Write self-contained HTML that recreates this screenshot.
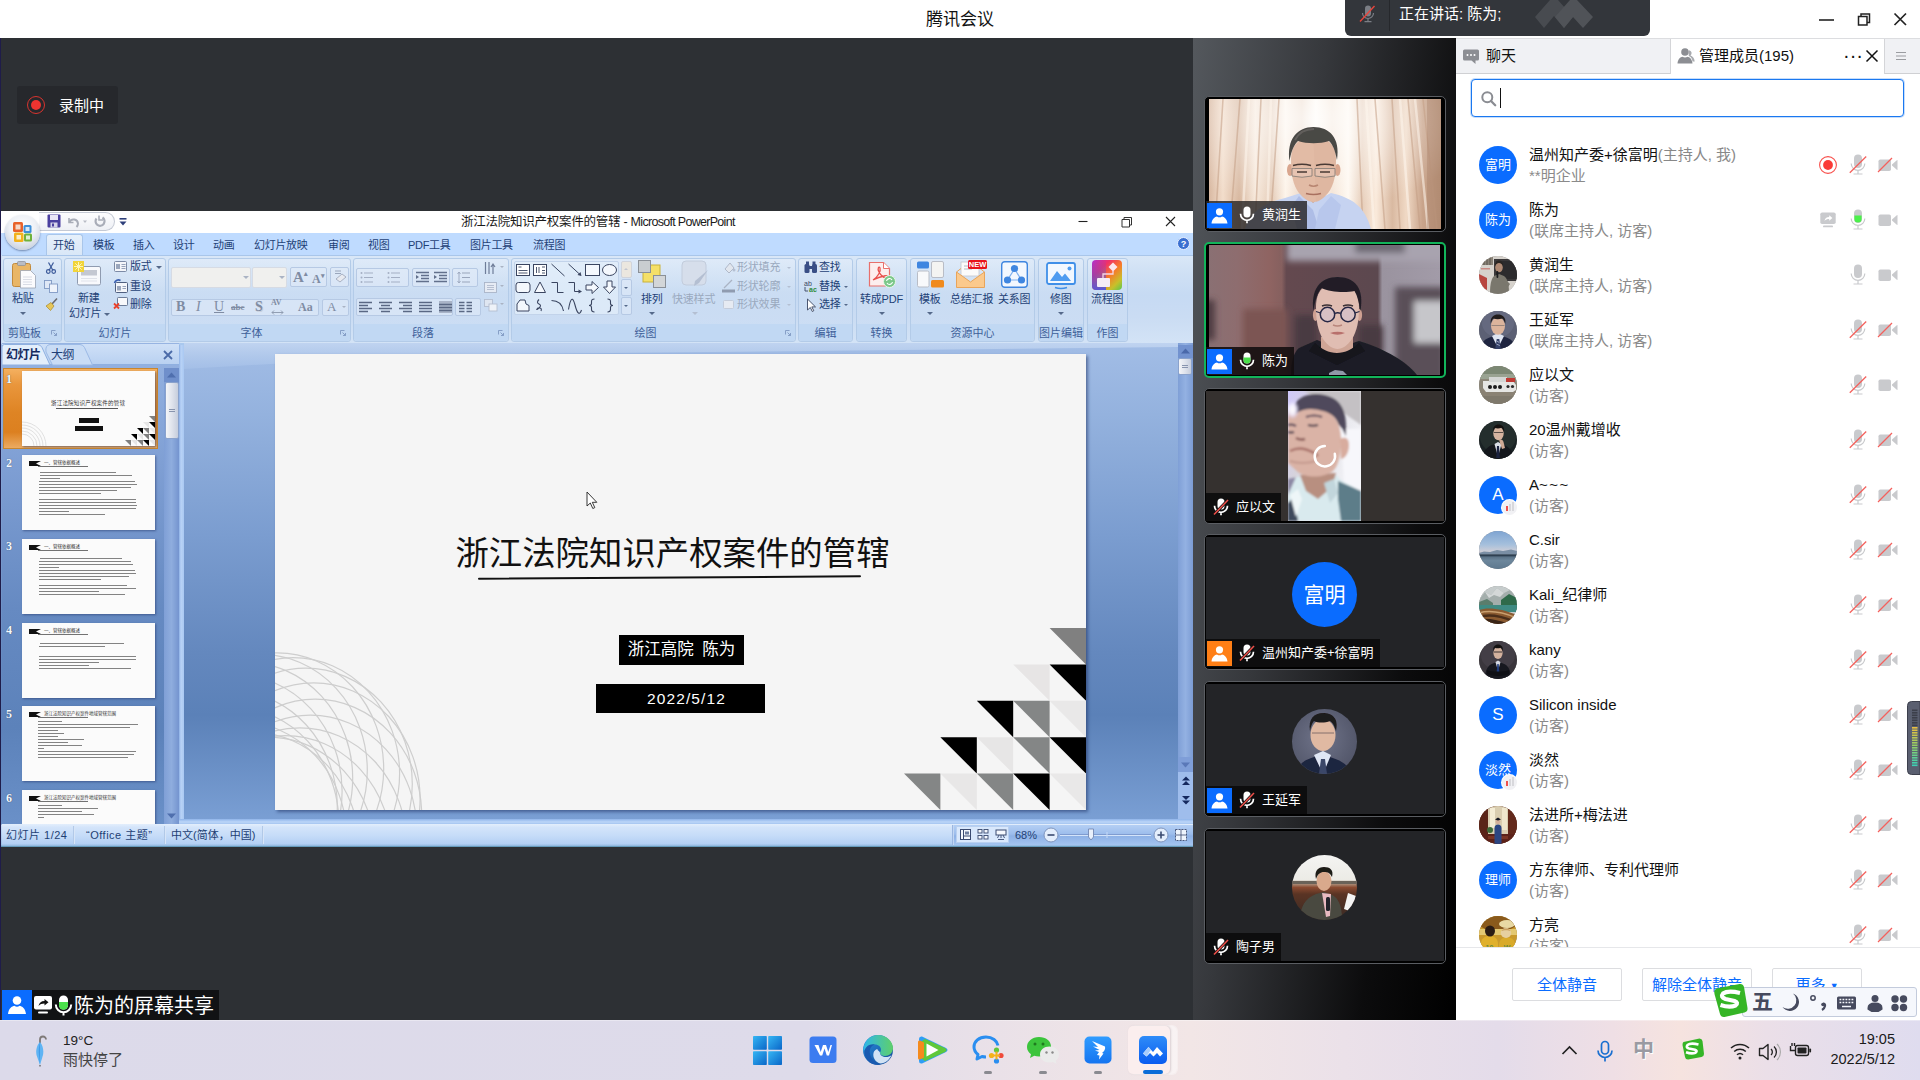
<!DOCTYPE html>
<html lang="zh-CN">
<head>
<meta charset="utf-8">
<title>腾讯会议</title>
<style>
*{box-sizing:border-box;margin:0;padding:0}
html,body{width:1920px;height:1080px;overflow:hidden;background:#2d3034;font-family:"Liberation Sans","Noto Sans CJK SC",sans-serif;color:#000}
.abs{position:absolute}
svg{display:block;overflow:visible}
#titlebar{position:absolute;left:0;top:0;width:1920px;height:38px;background:#fff}
#titlebar .t{position:absolute;left:0;width:1920px;top:8px;text-align:center;font-size:17px;color:#111;line-height:24px}
#main{position:absolute;left:0;top:38px;width:1193px;height:982px;background:#2d3034}
#strip{position:absolute;left:1193px;top:38px;width:263px;height:982px;background:linear-gradient(97deg,#54585d 0%,#36383c 35%,#0c0c0d 75%,#000 100%)}
#panel{position:absolute;left:1456px;top:38px;width:464px;height:982px;background:#fff}
#taskbar{position:absolute;left:0;top:1020px;width:1920px;height:60px;background:linear-gradient(90deg,#dcdaea 0%,#dedbea 42%,#eae1e8 52%,#f2e6e6 62%,#ebe1e9 70%,#e4dcea 78%,#efdfe5 84%,#f6e3df 87.5%,#ebdfe8 92%,#dfdcef 100%)}
#ppt{position:absolute;left:0;top:211px;width:1193px;height:635px;background:#bfdbff}
</style>
</head>
<body>

<div id="titlebar"><div class="t">腾讯会议</div>
<svg class="abs" style="left:1815px;top:8px" width="100" height="24" viewBox="0 0 100 24">
<path d="M4 12h15" stroke="#222" stroke-width="1.6" fill="none"/>
<path d="M43.5 8.500h8.500v8.500h-8.500z M46 8.500v-2.500h8.500v8.500h-2.500" stroke="#222" stroke-width="1.5" fill="none"/>
<path d="M79.500 5.500l11.500 11.500M91 5.500l-11.500 11.500" stroke="#222" stroke-width="1.7" fill="none"/>
</svg>
</div>
<div id="main"></div>
<div class="abs" style="left:0;top:38px;width:1px;height:982px;background:#1f1c4a"></div>
<!-- speaking box -->
<div class="abs" style="left:1345px;top:0;width:305px;height:36px;background:#33363b;border-radius:0 0 6px 6px;z-index:30">
 <div class="abs" style="left:44px;top:0;width:1px;height:31px;background:#26282c"></div>
 <svg class="abs" style="left:12px;top:3px" width="22" height="22" viewBox="0 0 22 22">
  <rect x="8" y="2.500" width="6" height="11" rx="3" fill="#7b7e85"/>
  <path d="M5.500 10a5.500 5.500 0 0 0 11 0M11 15.500v3M7.500 18.700h7" stroke="#7b7e85" stroke-width="1.200" fill="none"/>
  <path d="M3 18.500L17.500 3" stroke="#e8453c" stroke-width="1.400"/>
 </svg>
 <div class="abs" style="left:54px;top:2px;font-size:15px;line-height:24px;color:#fff;white-space:nowrap">正在讲话: 陈为;</div>
 <svg class="abs" style="left:188px;top:0" width="62" height="30" viewBox="0 0 62 30">
  <path d="M2 17L17 0h8L40 17 31 28 21 16 11 28z" fill="#484b50"/>
  <path d="M22 17L37 0h7L60 17 50 28 40 17 31 28z" fill="#505358"/>
 </svg>
</div>
<!-- recording badge -->
<div class="abs" style="left:17px;top:86px;width:101px;height:38px;background:#26282c;border-radius:3px">
 <div class="abs" style="left:10px;top:10px;width:18px;height:18px;border-radius:50%;border:1.3px solid #d8342f"></div>
 <div class="abs" style="left:14px;top:14px;width:10px;height:10px;border-radius:50%;background:#ee3430"></div>
 <div class="abs" style="left:42px;top:8px;font-size:15px;line-height:24px;color:#fff;white-space:nowrap">录制中</div>
</div>
<!-- share label bottom -->
<div class="abs" style="left:2px;top:990px;width:217px;height:30px;background:#111214;z-index:5">
 <div class="abs" style="left:0;top:0;width:30px;height:30px;background:#0a6cff"></div>
 <svg class="abs" style="left:0;top:0" width="30" height="30" viewBox="0 0 30 30">
  <circle cx="15" cy="10.500" r="4.300" fill="#fff"/>
  <path d="M6 24c0.500-5.500 4-8 6.500-8.300 1.500 1.300 3.500 1.300 5 0C20 16 23.500 18.500 24 24z" fill="#fff"/>
 </svg>
 <svg class="abs" style="left:31px;top:5px" width="22" height="20" viewBox="0 0 22 20">
  <rect x="1" y="1" width="18" height="13.500" rx="2" fill="#fff"/>
  <path d="M5.500 11c0.500-3 2.500-5 6-5v-2l4 3.300-4 3.300v-2c-2.500 0-4.500 0.700-6 2.400z" fill="#111"/>
  <rect x="5" y="16.500" width="10" height="2" rx="1" fill="#fff"/>
 </svg>
 <svg class="abs" style="left:52px;top:4px" width="20" height="24" viewBox="0 0 20 24">
  <rect x="5" y="1.500" width="9" height="14" rx="4.500" fill="#fff"/>
  <path d="M5 8h9v3.200a4.500 4.500 0 0 1-9 0z" fill="#4be04b"/>
  <path d="M1.800 10.500a7.700 7.700 0 0 0 15.400 0M9.500 18.500v3" stroke="#fff" stroke-width="2" fill="none"/>
 </svg>
 <div class="abs" style="left:72px;top:2px;font-size:20px;line-height:28px;color:#fff;white-space:nowrap">陈为的屏幕共享</div>
</div>

<div id="pptedge" class="abs" style="left:1px;top:211px;width:1px;height:636px;background:linear-gradient(180deg,#fff 0,#fff 22px,#bfdbff 22px,#bfdbff 44px,#cfe0f4 44px,#c6daf3 132px,#97b4e2 134px,#5c82ba 520px,#6a90c8 613px,#c6dcf8 614px,#9cc0e6 634px,#4d8aa8 636px)"></div>
<svg class="abs" style="left:1907px;top:701px;z-index:20" width="13" height="74" viewBox="0 0 13 74"><path d="M13 0.500h-8.500a4 4 0 0 0-4 4v65a4 4 0 0 0 4 4h8.500z" fill="#5a5f70" stroke="#3c3f4c" stroke-width="1"/><rect x="5" y="8.5" width="5.500" height="1.600" fill="#3c3f4a"/><rect x="5" y="11.0" width="5.500" height="1.600" fill="#3c3f4a"/><rect x="5" y="13.5" width="5.500" height="1.600" fill="#3c3f4a"/><rect x="5" y="16.0" width="5.500" height="1.600" fill="#3c3f4a"/><rect x="5" y="18.5" width="5.500" height="1.600" fill="#3c3f4a"/><rect x="5" y="21.0" width="5.500" height="1.600" fill="#3c3f4a"/><rect x="5" y="23.5" width="5.500" height="1.600" fill="#3c3f4a"/><rect x="5" y="26.0" width="5.500" height="1.600" fill="#e8c040"/><rect x="5" y="28.5" width="5.500" height="1.600" fill="#dcc245"/><rect x="5" y="31.0" width="5.500" height="1.600" fill="#d0c44a"/><rect x="5" y="33.5" width="5.500" height="1.600" fill="#c4c650"/><rect x="5" y="36.0" width="5.500" height="1.600" fill="#b9c855"/><rect x="5" y="38.5" width="5.500" height="1.600" fill="#adca5a"/><rect x="5" y="41.0" width="5.500" height="1.600" fill="#a1cc60"/><rect x="5" y="43.5" width="5.500" height="1.600" fill="#95ce65"/><rect x="5" y="46.0" width="5.500" height="1.600" fill="#8ad06d"/><rect x="5" y="48.5" width="5.500" height="1.600" fill="#7fd077"/><rect x="5" y="51.0" width="5.500" height="1.600" fill="#74d081"/><rect x="5" y="53.5" width="5.500" height="1.600" fill="#68d08b"/><rect x="5" y="56.0" width="5.500" height="1.600" fill="#5dd095"/><rect x="5" y="58.5" width="5.500" height="1.600" fill="#52d09f"/><rect x="5" y="61.0" width="5.500" height="1.600" fill="#47d0a9"/><rect x="5" y="63.5" width="5.500" height="1.600" fill="#3cd0b4"/></svg>

<style>
#ppt{position:absolute;left:2px;top:211px;width:1191px;height:636px;background:#bfdbff;overflow:hidden;font-family:"Liberation Sans","Noto Sans CJK SC",sans-serif}
#ppt .tt{position:absolute;left:0;top:0;width:1191px;height:22px;background:#fff}
#ppt .tabs{position:absolute;left:0;top:22px;width:1191px;height:22px;background:#bfdbff}
#ppt .tab{position:absolute;top:3px;font-size:11px;line-height:18px;color:#1e4176;white-space:nowrap;letter-spacing:-0.3px}
#rib{position:absolute;left:0;top:44px;width:1191px;height:88px;background:linear-gradient(180deg,#d9e7f7 0%,#cfe0f4 20%,#c6daf3 45%,#cadcf3 70%,#d3e3f6 100%);border-top:1px solid #a9c6ea}
.grp{position:absolute;top:2px;height:84px;border:1px solid #b3cbe8;border-radius:3px;background:linear-gradient(180deg,rgba(225,236,249,.7) 0%,rgba(206,223,243,.5) 40%,rgba(201,219,243,.5) 100%)}
.grp .gl{position:absolute;left:0;right:0;bottom:0;height:17px;background:#c1d8f3;font-size:11px;line-height:19px;overflow:hidden;text-align:center;color:#3e5f99;white-space:nowrap;border-radius:0 0 3px 3px}
.rt{position:absolute;margin-top:-1px;font-size:11px;line-height:14px;color:#1e4176;white-space:nowrap;letter-spacing:-0.2px}
.rt.dis{color:#9aa9be}
.bx{position:absolute;border:1px solid #b6c9e4;border-radius:2px;background:rgba(225,235,248,.55)}
.dd{position:absolute;width:0;height:0;border-left:3px solid transparent;border-right:3px solid transparent;border-top:3px solid #55698a}
#pane{position:absolute;left:0;top:132px;width:177px;height:481px;background:linear-gradient(180deg,#97b4e2 0%,#7f9fd4 25%,#668ac2 55%,#5c82ba 80%,#6a90c8 100%)}
.th{position:absolute;left:20px;width:133px;height:75px;background:#fbfbfb;box-shadow:1px 1px 2px rgba(40,60,110,.6);overflow:hidden}
.thn{position:absolute;left:4px;font-family:"Liberation Serif",serif;font-weight:bold;font-size:12px;color:#f4f8ff;text-shadow:0 0 1px #345}
.ln{position:absolute;height:1px;background:#555;opacity:.75}
#work{position:absolute;left:182px;top:132px;width:994px;height:477px;background:linear-gradient(180deg,#a2bde6 0%,#94b2de 15%,#7b9dd0 40%,#6488be 65%,#5b81b8 78%,#7a9fd4 100%);overflow:hidden}
#slide{position:absolute;left:273px;top:143px;width:811px;height:456px;background:#f5f5f5;box-shadow:2px 2px 3px rgba(30,50,100,.55);overflow:hidden}
#stat{position:absolute;left:0;top:613px;width:1191px;height:23px;background:linear-gradient(180deg,#e3eefc 0%,#d3e4fa 15%,#c6dcf8 50%,#b4d0f4 85%,#9cc0e6 93%,#4d8aa8 100%);font-size:11px;color:#1e3f74}
#stat .st{position:absolute;top:3px;line-height:16px;white-space:nowrap}
#stat .sp{position:absolute;top:2px;width:2px;height:18px;background:linear-gradient(90deg,#9fbbe0,#eaf3ff)}
</style>
<div id="ppt">
<div class="tt">
<div class="abs" style="left:37px;top:1px;width:76px;height:19px;border:1px solid #c4c9d4;border-left:none;border-radius:0 10px 10px 0;background:linear-gradient(180deg,#fdfdfe,#eef0f5)"></div>
<svg class="abs" style="left:45px;top:3px" width="14" height="14" viewBox="0 0 14 14"><rect x="0.500" y="0.500" width="13" height="13" rx="1" fill="#4a3f9f"/><rect x="3" y="1" width="8" height="5" fill="#e9e6f6"/><rect x="3.500" y="8.500" width="7" height="5" fill="#d6d3ea"/><rect x="5" y="9.500" width="2" height="3" fill="#4a3f9f"/></svg>
<svg class="abs" style="left:64px;top:4px" width="50" height="13" viewBox="0 0 50 13"><path d="M3 3v4.500h4.500" stroke="#a9adb8" stroke-width="1.600" fill="none"/><path d="M3.500 7a4.500 4.500 0 0 1 8.500 1.500q0 2-1.500 3.500" stroke="#a9adb8" stroke-width="2" fill="none"/><path d="M17 5.500h4l-2 2.500z" fill="#b9bcc6"/><path d="M36.500 2.500a4.500 4.500 0 1 1-6 1" stroke="#a9adb8" stroke-width="2.200" fill="none"/><path d="M33 0.500v4.500h4" stroke="#a9adb8" stroke-width="1.600" fill="none"/></svg>
<svg class="abs" style="left:117px;top:7px" width="8" height="9" viewBox="0 0 8 9"><rect x="0.500" y="0" width="7" height="1.600" fill="#2e3f7a"/><path d="M0.500 3.500h7l-3.500 4z" fill="#2e3f7a"/></svg>
<div id="ptitle" class="abs" style="left:459px;top:2px;font-size:12.500px;line-height:18px;color:#1a1a1a;letter-spacing:-0.25px;white-space:nowrap">浙江法院知识产权案件的管辖 - <span style="letter-spacing:-0.7px">Microsoft PowerPoint</span></div>
<svg class="abs" style="left:1070px;top:4px" width="110" height="14" viewBox="0 0 110 14"><path d="M6.500 6.500h9" stroke="#222" stroke-width="1.100"/><path d="M50 4.500h7.500v7.500h-7.500zM52 4.500v-2h7.500v7.500h-2" stroke="#333" stroke-width="1" fill="none"/><path d="M94 2l9 9M103 2l-9 9" stroke="#222" stroke-width="1.100"/></svg>
</div>
<div class="tabs">
<div class="abs" style="left:44px;top:1px;width:37px;height:21px;background:linear-gradient(180deg,#e6f0fb,#d9e7f7);border:1px solid #a9c6ea;border-bottom:none;border-radius:3px 3px 0 0"></div>
<div class="tab" style="left:51px">开始</div>
<div class="tab" style="left:91px">模板</div>
<div class="tab" style="left:131px">插入</div>
<div class="tab" style="left:171px">设计</div>
<div class="tab" style="left:211px">动画</div>
<div class="tab" style="left:252px">幻灯片放映</div>
<div class="tab" style="left:326px">审阅</div>
<div class="tab" style="left:366px">视图</div>
<div class="tab" style="left:406px">PDF工具</div>
<div class="tab" style="left:468px">图片工具</div>
<div class="tab" style="left:531px">流程图</div>
<svg class="abs" style="left:1175px;top:4px" width="13" height="13" viewBox="0 0 13 13"><circle cx="6.500" cy="6.500" r="6" fill="#3b6fd0" stroke="#e8f0ff" stroke-width="1"/><text x="6.500" y="10" font-size="9" font-weight="bold" fill="#fff" text-anchor="middle" font-family="Liberation Sans,sans-serif">?</text></svg>
</div>
<div class="abs" style="left:3px;top:4px;width:35px;height:35px;border-radius:50%;background:radial-gradient(circle at 50% 35%,#ffffff 0%,#eef1f6 45%,#cfd6e2 75%,#aab6c8 100%);box-shadow:0 1px 2px rgba(60,80,120,.6);z-index:3"></div>
<svg class="abs" style="left:10px;top:10px;z-index:4" width="22" height="22" viewBox="0 0 22 22"><rect x="1" y="1" width="10" height="10" rx="1.500" fill="#e8622a"/><rect x="3.500" y="3.500" width="5" height="5" fill="#f6d9c8"/><rect x="11.500" y="4" width="8" height="8" rx="1.500" fill="#3f8fd8"/><rect x="13.500" y="6" width="4" height="4" fill="#d6e8f8"/><rect x="2" y="11.500" width="9.500" height="9.500" rx="1.500" fill="#f2b21c"/><rect x="4.500" y="14" width="4.500" height="4.500" fill="#fbeec8"/><rect x="12" y="12.500" width="8" height="8" rx="1.500" fill="#6fb23a"/><rect x="14" y="14.500" width="4" height="4" fill="#dcefcf"/></svg>
<div id="rib">
<div class="grp" style="left:1px;width:59px"><div class="gl" style="text-align:left;padding-left:4px">剪贴板</div><svg class="abs" style="right:4px;bottom:5px" width="6" height="6" viewBox="0 0 6 6"><path d="M0.500 0.500h4M0.500 0.500v4M2.500 2.500l3 3M5.500 3v2.500h-2.500" stroke="#7f98c2" stroke-width="0.900" fill="none"/></svg>
<svg class="abs" style="left:8px;top:2px" width="25" height="28" viewBox="0 0 25 28"><rect x="0.500" y="2.500" width="18" height="23" rx="2" fill="#e9b666" stroke="#c28a3c" stroke-width="1"/><rect x="5.500" y="0.500" width="8" height="4" rx="1" fill="#b9bcc4" stroke="#8a8e98" stroke-width="0.700"/><path d="M8.500 9.500h10l5 5v12.500h-15z" fill="#fbfbfd" stroke="#9aa3b4" stroke-width="0.800"/><path d="M11 16h9M11 18.500h9M11 21h9M11 23.500h9" stroke="#d0d4de" stroke-width="0.800"/></svg>
<div class="rt" style="left:8px;top:33px">粘贴</div>
<div class="dd" style="left:16px;top:53px"></div>
<svg class="abs" style="left:41px;top:3px" width="12" height="12" viewBox="0 0 12 12"><path d="M3.500 0.500l4.500 8M8.500 0.500l-4.500 8" stroke="#3c5a9a" stroke-width="1.200"/><circle cx="3.300" cy="9.500" r="1.800" fill="none" stroke="#3c5a9a" stroke-width="1.200"/><circle cx="8.700" cy="9.500" r="1.800" fill="none" stroke="#3c5a9a" stroke-width="1.200"/></svg>
<svg class="abs" style="left:40px;top:21px" width="14" height="13" viewBox="0 0 14 13"><rect x="0.500" y="0.500" width="7" height="8" fill="#dfe8f6" stroke="#7f99c4" stroke-width="0.900"/><rect x="5.500" y="4" width="8" height="8.500" fill="#eef3fb" stroke="#7f99c4" stroke-width="0.900"/></svg>
<svg class="abs" style="left:41px;top:39px" width="13" height="13" viewBox="0 0 13 13"><path d="M12 0.500l-5 5.500" stroke="#6a6a70" stroke-width="1.600"/><path d="M1 8l5-3.500 3 3.500-3.500 4.500z" fill="#e6c65a" stroke="#a98a2a" stroke-width="0.700"/></svg>
</div>
<div class="grp" style="left:62px;width:102px"><div class="gl">幻灯片</div>
<svg class="abs" style="left:8px;top:2px" width="29" height="26" viewBox="0 0 29 26"><rect x="4.500" y="5.500" width="23" height="18.500" rx="1.500" fill="#f8f9fc" stroke="#8f9bb0" stroke-width="1"/><rect x="8" y="9" width="16" height="5.500" fill="#c4c8d2"/><path d="M8 17.500h16M8 20h16" stroke="#dfe2ea" stroke-width="1"/><rect x="0" y="0" width="11" height="11" fill="#f1d43a"/><path d="M5.500 1v9M1 5.500h9M2.300 2.300l6.400 6.400M8.700 2.300l-6.400 6.400" stroke="#fff6b8" stroke-width="1"/></svg>
<div class="rt" style="left:13px;top:33px">新建</div>
<div class="rt" style="left:4px;top:48px">幻灯片</div>
<div class="dd" style="left:39px;top:54px"></div>
<svg class="abs" style="left:49px;top:2px" width="13" height="11" viewBox="0 0 13 11"><rect x="0.500" y="0.500" width="12" height="10" rx="1" fill="#f4f6fa" stroke="#6f7f9c" stroke-width="0.900"/><rect x="2" y="3" width="4" height="5" fill="#9aa6bc"/><path d="M7.500 3.500h4M7.500 5.500h4M7.500 7.500h4" stroke="#7f8da8" stroke-width="0.800"/></svg>
<div class="rt" style="left:65px;top:1px">版式</div>
<div class="dd" style="left:91px;top:7px"></div>
<svg class="abs" style="left:49px;top:20px" width="14" height="14" viewBox="0 0 14 14"><rect x="1.500" y="3.500" width="12" height="10" rx="1" fill="#f4f6fa" stroke="#4f5f80" stroke-width="1"/><rect x="3" y="7" width="4" height="4.500" fill="#9aa6bc"/><path d="M8.500 7.500h3.500M8.500 9.500h3.500" stroke="#7f8da8" stroke-width="0.800"/><path d="M0.500 4a4 4 0 0 1 6-2.500" stroke="#3a5fb0" stroke-width="1.600" fill="none"/></svg>
<div class="rt" style="left:65px;top:21px">重设</div>
<svg class="abs" style="left:48px;top:38px" width="15" height="13" viewBox="0 0 15 13"><rect x="4.500" y="0.500" width="10" height="8" rx="0.800" fill="#f7f8fb" stroke="#5f6f8c" stroke-width="0.900"/><path d="M1 6.500l5 5M6 6.500l-5 5" stroke="#e8402a" stroke-width="1.800"/></svg>
<div class="rt" style="left:65px;top:39px">删除</div>
</div>
<div class="grp" style="left:166px;width:183px"><div class="gl" style="padding-right:16px">字体</div><svg class="abs" style="right:4px;bottom:5px" width="6" height="6" viewBox="0 0 6 6"><path d="M0.500 0.500h4M0.500 0.500v4M2.500 2.500l3 3M5.500 3v2.500h-2.500" stroke="#7f98c2" stroke-width="0.900" fill="none"/></svg>
<div class="bx" style="left:2px;top:8px;width:80px;height:21px;background:#f0f0ee;border-color:#d6dbe4"></div>
<div class="bx" style="left:83px;top:8px;width:35px;height:21px;background:#f0f0ee;border-color:#d6dbe4"></div>
<div class="dd" style="left:74px;top:17px;border-top-color:#aab3c4"></div>
<div class="dd" style="left:110px;top:17px;border-top-color:#aab3c4"></div>
<div class="bx" style="left:121px;top:8px;width:37px;height:20px;"></div>
<div class="bx" style="left:161px;top:8px;width:19px;height:20px;"></div>
<div class="bx" style="left:2px;top:40px;width:148px;height:17px;"></div>
<div class="bx" style="left:153px;top:40px;width:27px;height:17px;"></div>
<div style="font-family:'Liberation Serif',serif;color:#7f8ca3;position:absolute;line-height:18px;white-space:nowrap;left:124px;top:9px;font-size:15px;font-weight:bold">A<span style="font-size:7px;vertical-align:top;position:relative;top:-3px">▴</span></div>
<div style="font-family:'Liberation Serif',serif;color:#7f8ca3;position:absolute;line-height:18px;white-space:nowrap;left:143px;top:11px;font-size:12px;font-weight:bold">A<span style="font-size:7px;vertical-align:top;position:relative;top:-3px">▾</span></div>
<svg class="abs" style="left:164px;top:10px" width="14" height="14" viewBox="0 0 14 14"><path d="M2 2h6M2 4.500h6" stroke="#9aa6bc" stroke-width="1"/><path d="M3 10l6-5 4 3-6 5z" fill="#e8eaf0" stroke="#9aa3b6" stroke-width="0.800"/></svg>
<div style="font-family:'Liberation Serif',serif;color:#7f8ca3;position:absolute;line-height:18px;white-space:nowrap;left:7px;top:39px;font-weight:bold;font-size:14px">B</div>
<div style="font-family:'Liberation Serif',serif;color:#7f8ca3;position:absolute;line-height:18px;white-space:nowrap;left:27px;top:39px;font-style:italic;font-size:14px">I</div>
<div style="font-family:'Liberation Serif',serif;color:#7f8ca3;position:absolute;line-height:18px;white-space:nowrap;left:45px;top:39px;text-decoration:underline;font-size:14px">U</div>
<div style="font-family:'Liberation Serif',serif;color:#7f8ca3;position:absolute;line-height:18px;white-space:nowrap;left:62px;top:39px;text-decoration:line-through;font-size:9px;font-weight:bold">abc</div>
<div style="font-family:'Liberation Serif',serif;color:#7f8ca3;position:absolute;line-height:18px;white-space:nowrap;left:86px;top:39px;font-weight:bold;font-size:14px;text-shadow:1px 1px 0 #c9d0dc">S</div>
<div style="font-family:'Liberation Serif',serif;color:#7f8ca3;position:absolute;line-height:18px;white-space:nowrap;left:102px;top:35px;font-size:8px;font-weight:bold">AV</div>
<div style="font-family:'Liberation Serif',serif;color:#7f8ca3;position:absolute;line-height:18px;white-space:nowrap;left:129px;top:39px;font-size:12px;font-weight:bold">Aa</div>
<div style="font-family:'Liberation Serif',serif;color:#7f8ca3;position:absolute;line-height:18px;white-space:nowrap;left:158px;top:39px;font-size:13px">A</div>
<svg class="abs" style="left:102px;top:51px" width="13" height="5" viewBox="0 0 13 5"><path d="M1 2.500h11M3 0.500l-2 2 2 2M10 0.500l2 2-2 2" stroke="#8a96ac" stroke-width="0.900" fill="none"/></svg>
<div class="dd" style="left:173px;top:47px;border-top-color:#aab3c4;border-width:2px"></div>
</div>
<div class="grp" style="left:351px;width:156px"><div class="gl" style="padding-right:16px">段落</div><svg class="abs" style="right:4px;bottom:5px" width="6" height="6" viewBox="0 0 6 6"><path d="M0.500 0.500h4M0.500 0.500v4M2.500 2.500l3 3M5.500 3v2.500h-2.500" stroke="#7f98c2" stroke-width="0.900" fill="none"/></svg>
<div class="bx" style="left:2px;top:9px;width:53px;height:19px;"></div>
<div class="bx" style="left:58px;top:9px;width:38px;height:19px;"></div>
<div class="bx" style="left:98px;top:9px;width:26px;height:19px;"></div>
<div class="bx" style="left:2px;top:39px;width:97px;height:18px;"></div>
<div class="bx" style="left:101px;top:39px;width:26px;height:18px;"></div>
<svg class="abs" style="left:6px;top:12px" width="14" height="13" viewBox="0 0 14 13"><circle cx="1.500" cy="2" r="1" fill="#a4afc4"/><circle cx="1.500" cy="6.500" r="1" fill="#a4afc4"/><circle cx="1.500" cy="11" r="1" fill="#a4afc4"/><path d="M4 2h9M4 6.500h9M4 11h9" stroke="#a4afc4" stroke-width="1"/></svg>
<svg class="abs" style="left:33px;top:12px" width="14" height="13" viewBox="0 0 14 13"><circle cx="1.500" cy="2" r="1" fill="#a4afc4"/><circle cx="1.500" cy="6.500" r="1" fill="#a4afc4"/><circle cx="1.500" cy="11" r="1" fill="#a4afc4"/><path d="M4 2h9M4 6.500h9M4 11h9" stroke="#a4afc4" stroke-width="1"/></svg>
<svg class="abs" style="left:62px;top:12px" width="14" height="13" viewBox="0 0 14 13"><path d="M0 1.500h13M5 4.500h8M5 7.500h8M0 10.500h13" stroke="#62708c" stroke-width="1.500"/><path d="M0 4l3 2-3 2z" fill="#62708c"/></svg>
<svg class="abs" style="left:80px;top:12px" width="14" height="13" viewBox="0 0 14 13"><path d="M0 1.500h13M5 4.500h8M5 7.500h8M0 10.500h13" stroke="#62708c" stroke-width="1.500"/><path d="M0 4l3 2-3 2z" fill="#62708c"/></svg>
<svg class="abs" style="left:103px;top:12px" width="14" height="13" viewBox="0 0 14 13"><path d="M5 2h8M5 6.500h8M5 11h8" stroke="#9aa6bc" stroke-width="1.200"/><path d="M2 1v11M0.500 3l1.500-2 1.500 2M0.500 10l1.500 2 1.500-2" stroke="#9aa6bc" stroke-width="0.900" fill="none"/></svg>
<svg class="abs" style="left:5px;top:42px" width="14" height="13" viewBox="0 0 14 13"><path d="M0 1.500h13M0 4.500h9M0 7.500h13M0 10.500h9" stroke="#5a6884" stroke-width="1.400"/></svg>
<svg class="abs" style="left:25px;top:42px" width="14" height="13" viewBox="0 0 14 13"><path d="M0 1.500h13M2 4.500h9M0 7.500h13M2 10.500h9" stroke="#5a6884" stroke-width="1.400"/></svg>
<svg class="abs" style="left:45px;top:42px" width="14" height="13" viewBox="0 0 14 13"><path d="M0 1.500h13M4 4.500h9M0 7.500h13M4 10.500h9" stroke="#5a6884" stroke-width="1.400"/></svg>
<svg class="abs" style="left:65px;top:42px" width="14" height="13" viewBox="0 0 14 13"><path d="M0 1.500h13M0 4.500h13M0 7.500h13M0 10.500h13" stroke="#5a6884" stroke-width="1.400"/></svg>
<svg class="abs" style="left:85px;top:42px" width="14" height="13" viewBox="0 0 14 13"><rect x="0" y="0" width="13" height="12" fill="#a9b4c8"/><path d="M0 3.500h13M0 6.500h13M0 9.500h13" stroke="#5a6884" stroke-width="1.400"/></svg>
<svg class="abs" style="left:105px;top:42px" width="14" height="13" viewBox="0 0 14 13"><path d="M0 1.500h5.500M0 4.500h5.500M0 7.500h5.500M0 10.500h5.500M7.500 1.500h5.500M7.500 4.500h5.500M7.500 7.500h5.500M7.500 10.500h5.500" stroke="#5a6884" stroke-width="1.400"/></svg>
<svg class="abs" style="left:130px;top:3px" width="13" height="13" viewBox="0 0 13 13"><path d="M1.500 0v12M5 0v12M9 3v9M7 5l2-3 2 3" stroke="#6f7d99" stroke-width="1.200" fill="none"/></svg>
<svg class="abs" style="left:130px;top:22px" width="13" height="13" viewBox="0 0 13 13"><rect x="0.500" y="1.500" width="12" height="10" fill="#e6ebf4" stroke="#a9b4c8" stroke-width="0.900"/><path d="M3 4.500h7M3 6.500h7M3 8.500h7" stroke="#a9b4c8" stroke-width="0.800"/></svg>
<svg class="abs" style="left:130px;top:40px" width="14" height="13" viewBox="0 0 14 13"><rect x="0.500" y="0.500" width="8" height="7" fill="#dfe6f1" stroke="#b4bed0" stroke-width="0.900"/><rect x="5" y="5" width="8" height="7" fill="#eef2f8" stroke="#b4bed0" stroke-width="0.900"/></svg>
<div class="dd" style="left:146px;top:7px;border-top-color:#aab3c4;border-width:2px"></div>
<div class="dd" style="left:146px;top:26px;border-top-color:#aab3c4;border-width:2px"></div>
<div class="dd" style="left:146px;top:44px;border-top-color:#aab3c4;border-width:2px"></div>
</div>
<div class="grp" style="left:509px;width:285px"><div class="gl" style="padding-right:16px">绘图</div><svg class="abs" style="right:4px;bottom:5px" width="6" height="6" viewBox="0 0 6 6"><path d="M0.500 0.500h4M0.500 0.500v4M2.500 2.500l3 3M5.500 3v2.500h-2.500" stroke="#7f98c2" stroke-width="0.900" fill="none"/></svg>
<div class="bx" style="left:2px;top:2px;width:105px;height:54px;background:rgba(226,237,250,.75);border-color:#c2d3ea"></div>
<div class="bx" style="left:109px;top:2px;width:11px;height:17px;background:#ebe7df;border-color:#d0d4dc"></div>
<div class="bx" style="left:109px;top:20px;width:11px;height:17px;"></div>
<div class="bx" style="left:109px;top:38px;width:11px;height:18px;"></div>
<div class="dd" style="left:112px;top:9px;border-top:none;border-bottom:3px solid #c2c6d0;border-width:2px"></div>
<div class="dd" style="left:112px;top:28px;border-width:2px"></div>
<div class="dd" style="left:112px;top:46px;border-width:2px"></div>
<svg class="abs" style="left:2px;top:2px" width="106" height="55" viewBox="514 260 106 55"><g transform="translate(523 269)"><rect x="-6.500" y="-5.500" width="13" height="11" fill="#fff" stroke="#3a4560" stroke-width="1"/><path d="M-4.500 -3h3M-4.500 0.500h9M-4.500 3h9" stroke="#3a4560" stroke-width="0.900"/></g><g transform="translate(540 269)"><rect x="-6.500" y="-5.500" width="13" height="11" fill="#fff" stroke="#3a4560" stroke-width="1"/><path d="M-3.500 -3v6M-1 -3v6M2 -3h3M2 0.500h3M2 3h3" stroke="#3a4560" stroke-width="0.900"/></g><g transform="translate(558 269)"><path d="M-6.500 -6l13 12" stroke="#3a4560" stroke-width="1"/></g><g transform="translate(575 269)"><path d="M-6.500 -6l12 11" stroke="#3a4560" stroke-width="1"/><path d="M6.500 6l-4-1 3-3z" fill="#3a4560"/></g><g transform="translate(592.5 269)"><rect x="-7" y="-5.500" width="14" height="11" fill="#f4f8fd" stroke="#3a4560" stroke-width="1"/></g><g transform="translate(609.5 269)"><ellipse cx="0" cy="0" rx="7" ry="5.500" fill="#f4f8fd" stroke="#3a4560" stroke-width="1"/></g><g transform="translate(523 286.5)"><rect x="-7" y="-5" width="14" height="10" rx="2.500" fill="#f4f8fd" stroke="#3a4560" stroke-width="1"/></g><g transform="translate(540 286.5)"><path d="M0 -5.500l5.500 10.500h-11z" fill="#f4f8fd" stroke="#3a4560" stroke-width="1"/></g><g transform="translate(558 286.5)"><path d="M-6.500 -5h6v10h6" stroke="#3a4560" stroke-width="1" fill="none"/></g><g transform="translate(575 286.5)"><path d="M-6.500 -5h6v9h5" stroke="#3a4560" stroke-width="1" fill="none"/><path d="M7 4l-3.500-2v4z" fill="#3a4560"/></g><g transform="translate(592.5 286.5)"><path d="M-6.500 -2.500h6v-3.500l6.500 6-6.500 6v-3.500h-6z" fill="#f4f8fd" stroke="#3a4560" stroke-width="1"/></g><g transform="translate(609.5 286.5)"><path d="M-2.500 -6.500h5v6h3.500l-6 6.500-6-6.500h3.500z" fill="#f4f8fd" stroke="#3a4560" stroke-width="1"/></g><g transform="translate(523 304.5)"><path d="M-6 5.500v-7l3-4h5l1 4 3 1.500v5.500z" fill="#f4f8fd" stroke="#3a4560" stroke-width="1" stroke-linejoin="round"/></g><g transform="translate(540 304.5)"><path d="M-1 -6q-3 3 0 4.500t0 4-2 1 3-1 1 3" stroke="#3a4560" stroke-width="1.100" fill="none"/></g><g transform="translate(558 304.5)"><path d="M-6.500 -5q10 0 12 10.500" stroke="#3a4560" stroke-width="1.100" fill="none"/></g><g transform="translate(575 304.5)"><path d="M-6.500 4q3-18 6.500-4.500t6.500 5" stroke="#3a4560" stroke-width="1.100" fill="none"/></g><g transform="translate(592.5 304.5)"><path d="M2 -6.500q-3 0-3 2.500v2q0 2-2.500 2 2.500 0 2.500 2v2q0 2.500 3 2.500" stroke="#3a4560" stroke-width="1.100" fill="none"/></g><g transform="translate(609.5 304.5)"><path d="M-2 -6.500q3 0 3 2.500v2q0 2 2.500 2-2.500 0-2.500 2v2q0 2.500-3 2.500" stroke="#3a4560" stroke-width="1.100" fill="none"/></g></svg>
<svg class="abs" style="left:126px;top:1px" width="28" height="28" viewBox="0 0 28 28"><rect x="5" y="5" width="17" height="17" fill="#f5e067" stroke="#c9b23a" stroke-width="1"/><rect x="0.500" y="0.500" width="12" height="12" fill="#c9cdd0" stroke="#8a9098" stroke-width="1"/><rect x="15.500" y="15.500" width="12" height="12" fill="#d3d6d8" stroke="#8a9098" stroke-width="1"/></svg>
<div class="rt" style="left:129px;top:34px">排列</div>
<div class="dd" style="left:137px;top:53px"></div>
<svg class="abs" style="left:169px;top:1px" width="30" height="30" viewBox="0 0 30 30"><rect x="1" y="1" width="24" height="24" rx="4" fill="#d6deeb" stroke="#c2ccdc" stroke-width="1"/><path d="M27 10l-9 13-5 3 1-5z" fill="#b4bfd2"/></svg>
<div class="rt dis" style="left:160px;top:34px">快速样式</div>
<div class="dd" style="left:180px;top:53px;border-top-color:#b4bfd2"></div>
<div class="rt dis" style="left:225px;top:2px">形状填充</div>
<div class="dd" style="left:275px;top:8px;border-top-color:#b4bfd2;border-width:2px"></div>
<div class="rt dis" style="left:225px;top:21px">形状轮廓</div>
<div class="dd" style="left:275px;top:27px;border-top-color:#b4bfd2;border-width:2px"></div>
<div class="rt dis" style="left:225px;top:39px">形状效果</div>
<div class="dd" style="left:275px;top:45px;border-top-color:#b4bfd2;border-width:2px"></div>
<svg class="abs" style="left:210px;top:2px" width="14" height="50" viewBox="0 0 14 50"><path d="M3 8l5-6 4 5-5 5z" fill="#e1e6ee" stroke="#aab3c4" stroke-width="0.900"/><circle cx="12" cy="9" r="1.500" fill="#b4bfd2"/><path d="M2 27l8-8" stroke="#aab3c4" stroke-width="1.300"/><rect x="0" y="28.500" width="13" height="3" fill="#8f9bb0"/><rect x="1.500" y="39.500" width="10" height="8" rx="1" fill="#e6eaf2" stroke="#c2cad8" stroke-width="0.900"/></svg>
</div>
<div class="grp" style="left:796px;width:55px"><div class="gl">编辑</div>
<svg class="abs" style="left:5px;top:2px" width="14" height="51" viewBox="0 0 14 51"><rect x="0.500" y="3" width="5" height="9" rx="1.500" fill="#3a4f86"/><rect x="8" y="3" width="5" height="9" rx="1.500" fill="#3a4f86"/><rect x="2" y="0.500" width="3" height="4" fill="#3a4f86"/><rect x="8.500" y="0.500" width="3" height="4" fill="#3a4f86"/><rect x="5" y="5" width="4" height="3" fill="#3a4f86"/><text x="0" y="25" font-size="7" font-family="Liberation Sans,sans-serif" fill="#3a4560">ab</text><text x="5" y="31" font-size="7" font-weight="bold" font-family="Liberation Sans,sans-serif" fill="#2f8a3a">ac</text><path d="M1 26v4h3" stroke="#3a4560" stroke-width="0.900" fill="none"/><path d="M3.500 38v11l2.800-2.500 2 4 1.500-0.800-2-3.800h3.700z" fill="#fff" stroke="#3a4560" stroke-width="0.900"/></svg>
<div class="rt" style="left:20px;top:2px">查找</div>
<div class="rt" style="left:20px;top:21px">替换</div>
<div class="dd" style="left:45px;top:27px;border-width:2px"></div>
<div class="rt" style="left:20px;top:39px">选择</div>
<div class="dd" style="left:45px;top:45px;border-width:2px"></div>
</div>
<div class="grp" style="left:854px;width:51px"><div class="gl">转换</div>
<svg class="abs" style="left:11px;top:2px" width="28" height="28" viewBox="0 0 28 28"><path d="M1.500 1.500h14l6 6v17.500h-20z" fill="#fdeeee" stroke="#e8706c" stroke-width="1.200"/><path d="M15.500 1.500v6h6" fill="#fff" stroke="#e8706c" stroke-width="1"/><path d="M5 19c5-3 8-9 7-12-1-2-3 0-1 4 2 4 6 7 9 6 2-1 0-3-4-2-5 1-9 3-11 4z" fill="none" stroke="#e8504c" stroke-width="1.300"/><circle cx="21.500" cy="20.500" r="6" fill="#7cc88a" stroke="#eaf6ec" stroke-width="1"/><path d="M18.500 20a3 3 0 0 1 5.500-1M24.500 21a3 3 0 0 1-5.500 1" stroke="#fff" stroke-width="1.100" fill="none"/></svg>
<div class="rt" style="left:3px;top:34px">转成PDF</div>
<div class="dd" style="left:22px;top:53px"></div>
</div>
<div class="grp" style="left:908px;width:125px"><div class="gl">资源中心</div>
<svg class="abs" style="left:6px;top:2px" width="27" height="27" viewBox="0 0 27 27"><rect x="0" y="0.500" width="12" height="7" rx="1.500" fill="#3f86e0"/><rect x="0.500" y="10" width="11.500" height="16" rx="1.500" fill="#f8f9fb" stroke="#b9bdc6" stroke-width="1"/><rect x="14.500" y="0.500" width="12" height="16" rx="1.500" fill="#f4f4f2" stroke="#b9bdc6" stroke-width="1"/><rect x="14" y="19" width="13" height="7.500" rx="1.500" fill="#f08a1c"/></svg>
<div class="rt" style="left:8px;top:34px">模板</div>
<div class="dd" style="left:16px;top:53px"></div>
<svg class="abs" style="left:45px;top:1px" width="32" height="29" viewBox="0 0 32 29"><rect x="5" y="2" width="18" height="14" fill="#fbfbfb" stroke="#c2c6ce" stroke-width="0.800"/><path d="M8 6h8M8 9h8" stroke="#b4b8c2" stroke-width="1"/><path d="M0.500 12l14 10 14-10v15.500h-28z" fill="#fbc98c" stroke="#e8a45a" stroke-width="1"/><path d="M0.500 12l4.500-3.500M28.500 12l-4.500-3.500" stroke="#e8a45a" stroke-width="1"/><rect x="12" y="0" width="19" height="9" rx="1.500" fill="#e8141c"/><text x="21.500" y="7.300" font-size="7.500" font-weight="bold" fill="#fff" text-anchor="middle" font-family="Liberation Sans,sans-serif">NEW</text></svg>
<div class="rt" style="left:39px;top:34px">总结汇报</div>
<svg class="abs" style="left:90px;top:2px" width="27" height="27" viewBox="0 0 27 27"><rect x="0.700" y="0.700" width="25.600" height="25.600" rx="3" fill="#f2f7fe" stroke="#3f86e0" stroke-width="1.400"/><path d="M13.500 8l-7 11h14z" stroke="#7fb0ee" stroke-width="1.200" fill="none"/><circle cx="13.500" cy="7.500" r="3.600" fill="#3f86e0"/><circle cx="6.500" cy="19" r="3.600" fill="#3f86e0"/><circle cx="20.500" cy="19" r="3.600" fill="#3f86e0"/></svg>
<div class="rt" style="left:87px;top:34px">关系图</div>
</div>
<div class="grp" style="left:1036px;width:46px"><div class="gl">图片编辑</div>
<svg class="abs" style="left:7px;top:3px" width="30" height="28" viewBox="0 0 30 28"><rect x="1" y="1" width="28" height="21" rx="2" fill="#f2f8ff" stroke="#3f8fe8" stroke-width="1.800"/><path d="M4 19l7-10 5 6 3-3.500 6 7.500z" fill="#4f9cf0"/><circle cx="23.500" cy="6.500" r="2" fill="#4f9cf0"/><path d="M9 25.500q6 2 12 0" stroke="#3f8fe8" stroke-width="1.500" fill="none"/></svg>
<div class="rt" style="left:11px;top:34px">修图</div>
<div class="dd" style="left:19px;top:53px"></div>
</div>
<div class="grp" style="left:1085px;width:41px"><div class="gl">作图</div>
<svg class="abs" style="left:4px;top:1px" width="30" height="30" viewBox="0 0 30 30"><defs><linearGradient id="fl" x1="0" y1="0" x2="1" y2="1"><stop offset="0" stop-color="#b030d0"/><stop offset="0.300" stop-color="#f0306a"/><stop offset="0.550" stop-color="#f8782a"/><stop offset="0.800" stop-color="#c8c02a"/><stop offset="1" stop-color="#58c850"/></linearGradient><linearGradient id="fl2" x1="0" y1="0" x2="0" y2="1"><stop offset="0" stop-color="#4a50e8" stop-opacity="0"/><stop offset="1" stop-color="#4a50e8" stop-opacity="0.900"/></linearGradient></defs><rect width="30" height="30" rx="4" fill="url(#fl)"/><path d="M0 0h14v30h-10a4 4 0 0 1-4-4z" fill="url(#fl2)"/><path d="M21 2.500l4.500 4.500-4.500 4.500-4.500-4.500z" fill="#fbe6f0"/><path d="M21 11v3h-10v4" stroke="#f4d6e6" stroke-width="1.300" fill="none"/><rect x="5" y="18" width="13" height="9" rx="1" fill="#f6ecf6"/></svg>
<div class="rt" style="left:3px;top:34px">流程图</div>
</div>
</div>
<div class="abs" style="left:0;top:132px;width:1191px;height:2px;background:#a9c8ee"></div>
<div id="pane">
<div class="abs" style="left:0;top:1px;width:177px;height:21px;background:linear-gradient(180deg,#cfe0f7,#b9d1f1);border-bottom:1px solid #8fb0e0"></div>
<svg class="abs" style="left:0;top:1px" width="100" height="21" viewBox="0 0 100 21"><path d="M0 21V3q0-2.500 2.500-2.500h33q3 0 4.500 3l8 17.500z" fill="#e3eefb" stroke="#8fb0e0" stroke-width="1"/><path d="M44 8q-1-7 4-7.500h30q3 0 4.500 3l8 17.500h-40z" fill="#c9dcf5" stroke="#9cbae6" stroke-width="1"/></svg>
<div class="abs" style="left:4px;top:4px;font-size:12px;font-weight:bold;line-height:16px;color:#15295e;white-space:nowrap;letter-spacing:-0.5px">幻灯片</div>
<div class="abs" style="left:49px;top:4px;font-size:12px;line-height:16px;color:#1e3f78;white-space:nowrap;letter-spacing:-0.5px">大纲</div>
<svg class="abs" style="left:161px;top:7px" width="10" height="10" viewBox="0 0 10 10"><path d="M1 1l8 8M9 1l-8 8" stroke="#4a6aa8" stroke-width="1.800"/></svg>
<div class="abs" style="left:162px;top:25px;width:15px;height:456px;background:linear-gradient(90deg,#7f9fd6,#8fadde 50%,#7494cf)"></div>
<div class="abs" style="left:162px;top:25px;width:15px;height:14px;background:#6f8fcb"></div>
<svg class="abs" style="left:165px;top:29px" width="9" height="6" viewBox="0 0 9 6"><path d="M0 5.500l4.500-5 4.500 5z" fill="#4f6fae"/></svg>
<div class="abs" style="left:163px;top:39px;width:14px;height:57px;border:1px solid #8aa2cc;border-radius:2px;background:linear-gradient(90deg,#f4f5f8,#dfe3ec 50%,#c6cddc)"></div>
<div class="abs" style="left:167px;top:66px;width:6px;height:3px;border-top:1px solid #8894ae;border-bottom:1px solid #8894ae"></div>
<svg class="abs" style="left:165px;top:470px" width="9" height="6" viewBox="0 0 9 6"><path d="M0 0.500l4.500 5 4.500-5z" fill="#4f6fae"/></svg>
<div class="abs" style="left:1px;top:25px;width:155px;height:81px;border:1px solid #c8862e;background:linear-gradient(180deg,#f4b060 0%,#e9963c 20%,#de8424 55%,#dc8020 80%,#ecab62 100%)"></div>
<div class="thn" style="top:29px">1</div>
<div class="th" style="top:28px;height:75px">
<div class="abs" style="left:29px;top:28px;width:74px;font-size:5.500px;line-height:8px;color:#333;white-space:nowrap;letter-spacing:0.2px;transform-origin:0 0">浙江法院知识产权案件的管辖</div>
<div class="ln" style="left:34px;top:37px;width:62px;background:#222"></div>
<div class="abs" style="left:57px;top:47px;width:20px;height:5px;background:#111"></div>
<div class="abs" style="left:53px;top:55px;width:28px;height:5px;background:#111"></div>
<svg class="abs" style="left:0;top:47px" width="28" height="28" viewBox="0 0 28 28"><g fill="none" stroke="#d4d4d4" stroke-width="0.700"><circle cx="0" cy="28" r="12"/><circle cx="0" cy="28" r="15"/><circle cx="0" cy="28" r="18"/><circle cx="0" cy="28" r="21"/><circle cx="0" cy="28" r="24"/></g></svg>
<svg class="abs" style="left:103px;top:45px" width="30" height="30" viewBox="0 0 30 30"><path d="M24 0h6v6z" fill="#808080"/><path d="M18 6h6v6z" fill="#e6e6e6"/><path d="M24 6h6v6z" fill="#000"/><path d="M12 12h6v6z" fill="#000"/><path d="M18 12h6v6z" fill="#808080"/><path d="M24 12h6v6z" fill="#e8e8e8"/><path d="M6 18h6v6z" fill="#000"/><path d="M12 18h6v6z" fill="#e6e6e6"/><path d="M18 18h6v6z" fill="#808080"/><path d="M24 18h6v6z" fill="#000"/><path d="M0 24h6v6z" fill="#808080"/><path d="M6 24h6v6z" fill="#e6e6e6"/><path d="M12 24h6v6z" fill="#808080"/><path d="M18 24h6v6z" fill="#000"/><path d="M24 24h6v6z" fill="#e6e6e6"/></svg>
</div>
<div class="thn" style="top:113px">2</div>
<div class="th" style="top:112px;height:75px">
<svg class="abs" style="left:7px;top:6px" width="12" height="5" viewBox="0 0 12 5"><path d="M0 0h12l-5 2.500 5 2.500h-12z" fill="#111"/></svg>
<div class="ln" style="left:16px;top:11px;width:50px;background:#444"></div>
<div class="abs" style="left:22px;top:4px;font-size:4.500px;line-height:7px;color:#333;white-space:nowrap">一、管辖依据概述</div>
<div class="ln" style="left:18px;top:17px;width:76px;opacity:.72"></div>
<div class="ln" style="left:18px;top:20px;width:92px;opacity:.72"></div>
<div class="ln" style="left:18px;top:23px;width:20px;opacity:.72"></div>
<div class="ln" style="left:17px;top:26px;width:96px;opacity:.72"></div>
<div class="ln" style="left:17px;top:29px;width:98px;opacity:.72"></div>
<div class="ln" style="left:17px;top:32px;width:92px;opacity:.72"></div>
<div class="ln" style="left:17px;top:35px;width:78px;opacity:.72"></div>
<div class="ln" style="left:17px;top:38px;width:62px;opacity:.72"></div>
<div class="ln" style="left:17px;top:44px;width:97px;opacity:.72"></div>
<div class="ln" style="left:17px;top:47px;width:97px;opacity:.72"></div>
<div class="ln" style="left:17px;top:50px;width:98px;opacity:.72"></div>
<div class="ln" style="left:17px;top:53px;width:97px;opacity:.72"></div>
<div class="ln" style="left:17px;top:56px;width:30px;opacity:.72"></div>
<div class="ln" style="left:17px;top:59px;width:66px;opacity:.72"></div>
</div>
<div class="thn" style="top:196px">3</div>
<div class="th" style="top:195.5px;height:75px">
<svg class="abs" style="left:7px;top:6px" width="12" height="5" viewBox="0 0 12 5"><path d="M0 0h12l-5 2.500 5 2.500h-12z" fill="#111"/></svg>
<div class="ln" style="left:16px;top:11px;width:50px;background:#444"></div>
<div class="abs" style="left:22px;top:4px;font-size:4.500px;line-height:7px;color:#333;white-space:nowrap">一、管辖依据概述</div>
<div class="ln" style="left:18px;top:19px;width:82px;opacity:.72"></div>
<div class="ln" style="left:17px;top:22px;width:92px;opacity:.72"></div>
<div class="ln" style="left:17px;top:25px;width:94px;opacity:.72"></div>
<div class="ln" style="left:17px;top:28px;width:20px;opacity:.72"></div>
<div class="ln" style="left:17px;top:31px;width:96px;opacity:.72"></div>
<div class="ln" style="left:17px;top:34px;width:97px;opacity:.72"></div>
<div class="ln" style="left:17px;top:37px;width:90px;opacity:.72"></div>
<div class="ln" style="left:17px;top:40px;width:62px;opacity:.72"></div>
<div class="ln" style="left:17px;top:46px;width:88px;opacity:.72"></div>
<div class="ln" style="left:17px;top:49px;width:97px;opacity:.72"></div>
<div class="ln" style="left:17px;top:52px;width:60px;opacity:.72"></div>
<div class="ln" style="left:17px;top:55px;width:86px;opacity:.72"></div>
</div>
<div class="thn" style="top:280px">4</div>
<div class="th" style="top:279.5px;height:75px">
<svg class="abs" style="left:7px;top:6px" width="12" height="5" viewBox="0 0 12 5"><path d="M0 0h12l-5 2.500 5 2.500h-12z" fill="#111"/></svg>
<div class="ln" style="left:16px;top:11px;width:50px;background:#444"></div>
<div class="abs" style="left:22px;top:4px;font-size:4.500px;line-height:7px;color:#333;white-space:nowrap">一、管辖依据概述</div>
<div class="ln" style="left:18px;top:20px;width:84px;opacity:.72"></div>
<div class="ln" style="left:17px;top:23px;width:66px;opacity:.72"></div>
<div class="ln" style="left:17px;top:33px;width:97px;opacity:.72"></div>
<div class="ln" style="left:17px;top:36px;width:97px;opacity:.72"></div>
<div class="ln" style="left:17px;top:39px;width:60px;opacity:.72"></div>
<div class="ln" style="left:17px;top:42px;width:50px;opacity:.72"></div>
<div class="ln" style="left:17px;top:45px;width:92px;opacity:.72"></div>
</div>
<div class="thn" style="top:364px">5</div>
<div class="th" style="top:363px;height:75px">
<svg class="abs" style="left:7px;top:6px" width="12" height="5" viewBox="0 0 12 5"><path d="M0 0h12l-5 2.500 5 2.500h-12z" fill="#111"/></svg>
<div class="ln" style="left:16px;top:11px;width:50px;background:#444"></div>
<div class="abs" style="left:22px;top:4px;font-size:4.500px;line-height:7px;color:#333;white-space:nowrap">浙江法院知识产权案件地域管辖范围</div>
<div class="ln" style="left:16px;top:15px;width:24px;opacity:.72"></div>
<div class="ln" style="left:16px;top:18px;width:100px;opacity:.72"></div>
<div class="ln" style="left:16px;top:21px;width:92px;opacity:.72"></div>
<div class="ln" style="left:16px;top:24px;width:20px;opacity:.72"></div>
<div class="ln" style="left:16px;top:27px;width:26px;opacity:.72"></div>
<div class="ln" style="left:16px;top:30px;width:20px;opacity:.72"></div>
<div class="ln" style="left:16px;top:33px;width:46px;opacity:.72"></div>
<div class="ln" style="left:16px;top:36px;width:30px;opacity:.72"></div>
<div class="ln" style="left:16px;top:39px;width:44px;opacity:.72"></div>
<div class="ln" style="left:16px;top:42px;width:6px;opacity:.72"></div>
<div class="ln" style="left:16px;top:45px;width:98px;opacity:.72"></div>
<div class="ln" style="left:16px;top:48px;width:96px;opacity:.72"></div>
<div class="ln" style="left:16px;top:51px;width:90px;opacity:.72"></div>
</div>
<div class="thn" style="top:448px">6</div>
<div class="th" style="top:447px;height:34px">
<svg class="abs" style="left:7px;top:6px" width="12" height="5" viewBox="0 0 12 5"><path d="M0 0h12l-5 2.500 5 2.500h-12z" fill="#111"/></svg>
<div class="ln" style="left:16px;top:11px;width:50px;background:#444"></div>
<div class="abs" style="left:22px;top:4px;font-size:4.500px;line-height:7px;color:#333;white-space:nowrap">浙江法院知识产权案件地域管辖范围</div>
<div class="ln" style="left:16px;top:15px;width:24px;opacity:.72"></div>
<div class="ln" style="left:16px;top:18px;width:60px;opacity:.72"></div>
<div class="ln" style="left:16px;top:21px;width:44px;opacity:.72"></div>
<div class="ln" style="left:16px;top:24px;width:56px;opacity:.72"></div>
<div class="ln" style="left:16px;top:27px;width:6px;opacity:.72"></div>
</div>
</div>
<div class="abs" style="left:177px;top:134px;width:5px;height:479px;background:linear-gradient(90deg,#8db0e6,#b9d3f6 40%,#a9c8f2)"></div>
<div id="work">
<svg class="abs" style="left:0;top:0" width="994" height="120" viewBox="0 0 994 120"><defs><linearGradient id="wk" x1="0" y1="0" x2="0" y2="1"><stop offset="0" stop-color="#c3d6f1"/><stop offset="1" stop-color="#aac4ea" stop-opacity="0.600"/></linearGradient></defs><path d="M0 0h994v4L240 12 0 26z" fill="url(#wk)" opacity="0.900"/></svg>
</div>
<div class="abs" style="left:1176px;top:132px;width:15px;height:481px;background:linear-gradient(90deg,#7f9fd6,#93b1e2 50%,#7c9cd4)"></div>
<div class="abs" style="left:1176px;top:134px;width:15px;height:13px;background:#7292cf"></div>
<svg class="abs" style="left:1179px;top:137px" width="9" height="6" viewBox="0 0 9 6"><path d="M0 5.500l4.500-5 4.500 5z" fill="#4a69aa"/></svg>
<div class="abs" style="left:1176px;top:147px;width:14px;height:17px;border:1px solid #8aa2cc;border-radius:2px;background:linear-gradient(90deg,#f4f5f8,#dfe3ec 50%,#c6cddc)"></div>
<div class="abs" style="left:1180px;top:154px;width:6px;height:3px;border-top:1px solid #8894ae;border-bottom:1px solid #8894ae"></div>
<div class="abs" style="left:1176px;top:546px;width:15px;height:15px;background:#7f9ed8"></div>
<svg class="abs" style="left:1179px;top:551px" width="9" height="6" viewBox="0 0 9 6"><path d="M0 0.500l4.500 5 4.500-5z" fill="#5a78b8"/></svg>
<div class="abs" style="left:1176px;top:561px;width:15px;height:52px;background:#9fbdec"></div>
<svg class="abs" style="left:1180px;top:565px" width="8" height="30" viewBox="0 0 8 30"><path d="M0 4.500l4-4 4 4zM0 9l4-4 4 4z" fill="#15295e"/><path d="M0 20l4 4 4-4zM0 24.500l4 4 4-4z" fill="#15295e"/></svg>
<div class="abs" style="left:177px;top:608px;width:1014px;height:5px;background:linear-gradient(180deg,#8fb4ea,#bcd6f8 60%,#a4c4f0)"></div>
<div id="slide">
<svg class="abs" style="left:0;top:296px" width="152" height="160" viewBox="0 296 152 160"><g fill="none" stroke="#cecece" stroke-width="1.200"><ellipse cx="40.2" cy="461.2" rx="106.5" ry="116"/><ellipse cx="35.4" cy="477.1" rx="106.5" ry="116"/><ellipse cx="24.8" cy="489.8" rx="106.5" ry="116"/><ellipse cx="10.2" cy="497.6" rx="106.5" ry="116"/><ellipse cx="-6.2" cy="499.2" rx="106.5" ry="116"/><ellipse cx="-22.1" cy="494.4" rx="106.5" ry="116"/><ellipse cx="-34.8" cy="483.8" rx="106.5" ry="116"/><ellipse cx="-42.6" cy="469.2" rx="106.5" ry="116"/><ellipse cx="-44.2" cy="452.8" rx="106.5" ry="116"/><ellipse cx="-39.4" cy="436.9" rx="106.5" ry="116"/><ellipse cx="-28.8" cy="424.2" rx="106.5" ry="116"/><ellipse cx="-14.2" cy="416.4" rx="106.5" ry="116"/><ellipse cx="2.2" cy="414.8" rx="106.5" ry="116"/><ellipse cx="18.1" cy="419.6" rx="106.5" ry="116"/><ellipse cx="30.8" cy="430.2" rx="106.5" ry="116"/><ellipse cx="38.6" cy="444.8" rx="106.5" ry="116"/></g></svg>
<svg class="abs" style="left:629px;top:274px" width="182" height="182" viewBox="0 0 181.250 181.250"><path d="M145.00 0.00h36.25v36.25z" fill="#808080"/><path d="M108.75 36.25h36.25v36.25z" fill="#e7e5e5"/><path d="M145.00 36.25h36.25v36.25z" fill="#000"/><path d="M72.50 72.50h36.25v36.25z" fill="#000"/><path d="M108.75 72.50h36.25v36.25z" fill="#848686"/><path d="M145.00 72.50h36.25v36.25z" fill="#e9e8e8"/><path d="M36.25 108.75h36.25v36.25z" fill="#000"/><path d="M72.50 108.75h36.25v36.25z" fill="#e7e6e6"/><path d="M108.75 108.75h36.25v36.25z" fill="#848686"/><path d="M145.00 108.75h36.25v36.25z" fill="#000"/><path d="M0.00 145.00h36.25v36.25z" fill="#848686"/><path d="M36.25 145.00h36.25v36.25z" fill="#e8e7e7"/><path d="M72.50 145.00h36.25v36.25z" fill="#848686"/><path d="M108.75 145.00h36.25v36.25z" fill="#000"/><path d="M145.00 145.00h36.25v36.25z" fill="#e9e8e8"/></svg>
<div class="abs" style="left:0;top:175px;width:795px;text-align:center;font-size:33.400px;line-height:50px;color:#111;white-space:nowrap">浙江法院知识产权案件的管辖</div>
<svg class="abs" style="left:200px;top:218px" width="390" height="10" viewBox="0 0 390 10"><path d="M4 6.800Q120 6 385 4.300" stroke="#111" stroke-width="2" fill="none" stroke-linecap="round"/></svg>
<div class="abs" style="left:344px;top:281px;width:125px;height:30px;background:#000;color:#fff;font-size:16.500px;line-height:29px;text-align:center;white-space:nowrap;word-spacing:4px">浙江高院 陈为</div>
<div class="abs" style="left:321px;top:330px;width:169px;height:29px;background:#000;color:#fff;font-size:15.500px;line-height:29px;text-align:center;white-space:nowrap;letter-spacing:1.1px;padding-left:12px">2022/5/12</div>
</div>
<svg class="abs" style="left:584px;top:280px;z-index:9" width="13" height="19" viewBox="0 0 13 19"><path d="M1 1v14l3.300-3 2.500 5.500 2-0.900-2.500-5.300h4.500z" fill="#fff" stroke="#222" stroke-width="0.900"/></svg>
<div id="stat">
<div class="st" style="left:4px;letter-spacing:0.5px">幻灯片 1/24</div><div class="sp" style="left:71px"></div>
<div class="st" style="left:84px;letter-spacing:0.5px">“Office 主题”</div><div class="sp" style="left:162px"></div>
<div class="st" style="left:169px">中文(简体，中国)</div><div class="sp" style="left:260px"></div>
<div class="abs" style="left:950px;top:1px;width:241px;height:20px;background:linear-gradient(180deg,#b4cff4 0%,#9dbdec 45%,#8db1e6 55%,#a4c4f0 100%)"></div>
<div class="abs" style="left:950px;top:1px;width:2px;height:20px;background:linear-gradient(90deg,#86a6d8,#d6e6fb)"></div>
<div class="abs" style="left:954px;top:2px;width:53px;height:17px;background:#d9e8fc;border:1px solid #b9d0f0"></div>
<svg class="abs" style="left:958px;top:5px" width="48" height="12" viewBox="0 0 48 12"><rect x="0.500" y="0.500" width="10" height="10" fill="#f6f9fe" stroke="#3a4a70" stroke-width="1"/><path d="M3.500 0.500v10M3.500 7h7" stroke="#3a4a70" stroke-width="1"/><rect x="5" y="2.500" width="4" height="3" fill="#6f7fa0"/><g fill="#f6f9fe" stroke="#3a4a70" stroke-width="0.900"><rect x="18" y="0.500" width="4" height="3.500"/><rect x="24" y="0.500" width="4" height="3.500"/><rect x="18" y="6.500" width="4" height="3.500"/><rect x="24" y="6.500" width="4" height="3.500"/></g><rect x="36" y="1" width="10" height="5" fill="#f6f9fe" stroke="#3a4a70" stroke-width="1"/><path d="M41 6v3M38 10.500h6M39 6l-1.500 3M43 6l1.500 3" stroke="#3a4a70" stroke-width="0.900"/></svg>
<div class="st" style="left:1013px;top:3px;color:#1e3f74">68%</div>
<svg class="abs" style="left:1040px;top:2px" width="150" height="18" viewBox="0 0 150 18"><path d="M18 9.500h91" stroke="#d4e4fa" stroke-width="1"/><path d="M18 8.500h91" stroke="#7f9cd0" stroke-width="1"/><path d="M65 6v6" stroke="#c6daf6" stroke-width="1"/><circle cx="9" cy="9" r="7" fill="#e4eefc" stroke="#7f95be" stroke-width="1"/><path d="M5.500 9h7" stroke="#3a4a70" stroke-width="1.600"/><path d="M46.500 3h5v8l-2.500 3-2.500-3z" fill="#e9f0fb" stroke="#7488b2" stroke-width="0.900"/><circle cx="119" cy="9" r="7" fill="#e4eefc" stroke="#7f95be" stroke-width="1"/><path d="M115.500 9h7M119 5.500v7" stroke="#3a4a70" stroke-width="1.600"/><rect x="133.500" y="3.500" width="11" height="11" fill="#eef4fd" stroke="#3a4a70" stroke-width="0.900" stroke-dasharray="2 1"/><path d="M139 3.500v11M133.500 9h11" stroke="#3a4a70" stroke-width="0.800"/></svg>
</div>
</div>
<style>
.tile{position:absolute;left:11px;width:242px;height:136px;border:1px solid #5a5d62;border-radius:5px;background:#000}
.tile.act{border:2px solid #12b45a}
.tin{position:absolute;left:1px;top:2px;width:238px;height:130px;background:#232427;overflow:hidden}
.tile.act .tin{left:0;top:1px}
.tile.act .lab{left:0;bottom:1px}
.lab{position:absolute;left:1px;bottom:2px;height:28px;background:rgba(10,10,11,.88);color:#fff;font-size:13px;line-height:28px;white-space:nowrap;padding-right:6px}

.ubox{position:absolute;left:1px;top:2px;width:25px;height:25px;background:#0a6cff}
.bigav{position:absolute;left:86px;top:26px;width:65px;height:65px;border-radius:50%;overflow:hidden;background:#0a6cff;color:#fff;font-size:21px;line-height:65px;text-align:center}
</style>
<div id="strip">
<div class="tile" style="top:58px"><div class="tin" style="left:4px;top:2px;width:232px;background:#000">
<svg class="abs" style="left:0;top:0;overflow:hidden" width="232" height="130" viewBox="0 0 232 130">
<defs>
<linearGradient id="cur" x1="0" x2="1" y1="0" y2="0"><stop offset="0" stop-color="#d9b9a2"/><stop offset="0.060" stop-color="#f2ddcb"/><stop offset="0.130" stop-color="#d8b8a0"/><stop offset="0.200" stop-color="#f7e8da"/><stop offset="0.270" stop-color="#e3c9b4"/><stop offset="0.330" stop-color="#fdf3e8"/><stop offset="0.400" stop-color="#ead4c2"/><stop offset="0.460" stop-color="#fffaf3"/><stop offset="0.530" stop-color="#f3e2d3"/><stop offset="0.600" stop-color="#fff8f0"/><stop offset="0.660" stop-color="#e6cdb9"/><stop offset="0.720" stop-color="#faeadb"/><stop offset="0.790" stop-color="#d9b9a1"/><stop offset="0.850" stop-color="#f0d9c5"/><stop offset="0.920" stop-color="#c9a48b"/><stop offset="1" stop-color="#b89379"/></linearGradient>
<radialGradient id="glow" cx="0.450" cy="0.150" r="0.700"><stop offset="0" stop-color="#fff" stop-opacity="0.750"/><stop offset="1" stop-color="#fff" stop-opacity="0"/></radialGradient>
<filter id="b1"><feGaussianBlur stdDeviation="0.600"/></filter>
</defs>
<rect width="232" height="130" fill="url(#cur)"/>
<rect width="232" height="130" fill="url(#glow)"/>
<g opacity="0.550">
<path d="M14 0l-8 130M31 0l-10 130M52 0l-6 130M70 0l-9 130M148 0l6 130M166 0l10 130M183 0l8 130M199 0l12 130M214 0l14 130" stroke="#c49f86" stroke-width="1.600" fill="none"/>
<path d="M40 0l-7 130M62 0l-4 130M157 0l8 130M191 0l10 130M206 0l13 130" stroke="#fff7ee" stroke-width="2.500" fill="none"/>
</g>
<rect x="218" y="0" width="14" height="130" fill="#a67f66" opacity="0.350"/>
<g filter="url(#b1)">
<path d="M36 130c4-16 18-26 40-31l16-5 14 8 16-8c22 5 34 14 40 36z" fill="#c6d3f1"/>
<path d="M90 97l14 14 6 19h-22l-6-22z" fill="#aebde6"/>
<path d="M122 97l-12 14-4 19h20l6-24z" fill="#b8c7ec"/>
<path d="M92 92l12 12 14-12v-8h-26z" fill="#c99f88"/>
<ellipse cx="81" cy="71" rx="3" ry="6" fill="#d9a68e"/><ellipse cx="128.500" cy="71" rx="3" ry="6" fill="#d9a68e"/>
<path d="M82 60c0-14 8-22 22.500-22s22.500 8 22.500 22c0 16-2 26-8 34-5 6-10 9-14.500 9s-9.500-3-14.500-9c-6-8-8-18-8-34z" fill="#e2bba5"/>
<path d="M104.500 38c14 0 22.500 8 22.500 22 0 16-2 26-8 34-4 5-8 8-12 9z" fill="#d8ad96" opacity="0.250"/>
<path d="M80.500 62c-3-22 8-34 24-34s27 11 23.500 33c-2-10-4-15-8-19-9 3-22 3-31 0-4 4-6.500 9-8.500 20z" fill="#4a4845"/>
<path d="M86 41c4-8 12-11 19-11" stroke="#6c6a66" stroke-width="2" fill="none" opacity="0.700"/>
<path d="M84 66.500q9-2.500 18 0M107 66.500q9-2.500 18 0" stroke="#4a3a34" stroke-width="1.700" fill="none"/>
<path d="M83 69.500h20v7.500q-10 2.500-20 0zM106 69.500h20v7.500q-10 2.500-20 0z" stroke="#8a8078" stroke-width="0.900" fill="#f0d8cc" fill-opacity="0.350"/>
<path d="M88 73h10M111 73h10" stroke="#4a3a34" stroke-width="1.300"/>
<path d="M100 86q4.500 2.500 9 0" stroke="#b88672" stroke-width="1.600" fill="none"/>
<path d="M97 94.500q7.500 2 15 0" stroke="#a8705f" stroke-width="1.600" fill="none"/>
</g>
</svg>
</div>
<div class="lab" style="background:rgba(40,38,38,.82)"><div class="ubox" style="background:#0a6cff"><svg class="abs" style="left:0;top:0" width="25" height="25" viewBox="0 0 25 25"><circle cx="12.500" cy="8.800" r="3.600" fill="#fff"/><path d="M4.500 20.500c0.400-4.600 3.300-6.800 5.500-7.100 1.500 1.200 3.500 1.200 5 0 2.200 0.300 5.100 2.500 5.500 7.100z" fill="#fff"/></svg></div><svg class="abs" style="left:31px;top:4px" width="20" height="22" viewBox="0 0 20 22"><rect x="6.500" y="1.500" width="7" height="11" rx="3.500" fill="#fff"/><path d="M3.500 8.800a6.500 6.500 0 0 0 13 0M10 15.300v3" stroke="#fff" stroke-width="1.700" fill="none"/></svg><span style="margin-left:56px">黄润生</span></div>
</div>
<div class="tile act" style="top:204px"><div class="tin" style="left:3px;top:1px;width:231px;height:130px;background:#000">
<svg class="abs" style="left:0;top:0;overflow:hidden" width="231" height="130" viewBox="0 0 231 130">
<defs>
<linearGradient id="bg2" x1="0" x2="1" y1="0" y2="0"><stop offset="0" stop-color="#8a7073"/><stop offset="0.120" stop-color="#8e6d6f"/><stop offset="0.260" stop-color="#8f6462"/><stop offset="0.315" stop-color="#86605f"/><stop offset="0.335" stop-color="#64494f"/><stop offset="0.730" stop-color="#5c484f"/><stop offset="0.750" stop-color="#9a939f"/><stop offset="1" stop-color="#a29ba8"/></linearGradient>
<filter id="b2"><feGaussianBlur stdDeviation="0.700"/></filter>
<filter id="b2b"><feGaussianBlur stdDeviation="3"/></filter>
</defs>
<rect width="231" height="130" fill="url(#bg2)"/>
<g filter="url(#b2b)">
<rect x="78" y="-6" width="160" height="22" fill="#a8a3af"/>
<rect x="146" y="-4" width="50" height="12" fill="#6c6872"/>
<rect x="186" y="42" width="50" height="95" fill="#5a5058"/>
<rect x="205" y="56" width="32" height="42" fill="#c6c6ca"/>
<rect x="-6" y="55" width="12" height="40" fill="#4f3e42"/>
<rect x="34" y="64" width="44" height="70" fill="#7b5453"/>
<rect x="86" y="70" width="22" height="60" fill="#4a3a42"/>
<rect x="150" y="80" width="24" height="30" fill="#4a3a42"/>
</g>
<g filter="url(#b2)">
<path d="M82 130c0-12 2-22 8-27l18-8 20 8 22-7c20 6 46 18 58 34z" fill="#1b1d25"/>
<path d="M112 92h32v12l-16 8-16-8z" fill="#cfa596"/>
<ellipse cx="106.500" cy="70" rx="2.600" ry="6" fill="#cfa092"/><ellipse cx="150.500" cy="70" rx="2.600" ry="6" fill="#cfa092"/>
<path d="M107 62c0-16 8-24 21.500-24s21.500 8 21.500 24c0 14-2 24-7 32-4.500 6.500-9.500 10-14.500 10s-10-3.500-14.500-10c-5-8-7-18-7-32z" fill="#e0bdb2"/>
<path d="M104.500 66c-3-22 7-34 24-34 18 0 27 12 23 34-2-10-3-15-6-20-10 2-25 1-33-3-4 5-6 11-8 23z" fill="#211f28"/>
<circle cx="118.500" cy="69.500" r="7.200" fill="#c9c6e6" fill-opacity="0.350" stroke="#272845" stroke-width="1.500"/><circle cx="139" cy="69.500" r="7.200" fill="#c9c6e6" fill-opacity="0.350" stroke="#272845" stroke-width="1.500"/>
<path d="M125.700 68.500q3-1.500 6 0M107 66.500l4.500 1.500M150.500 66.500l-4.500 1.500" stroke="#272845" stroke-width="1.300" fill="none"/>
<path d="M113 61q5-2 10 0M134 61q5-2 10 0" stroke="#3a3034" stroke-width="1.600" fill="none"/>
<path d="M124 80q4.500 2 9 0" stroke="#b8867c" stroke-width="1.400" fill="none"/>
<path d="M121 88q7.500 3.500 15 0q-7.500-2.500-15 0z" fill="#b8706c"/>
<path d="M106 98c6 6 14 10 22 10s16-4 22-10l6 8-28 14-28-14z" fill="#12131a"/>
<path d="M120 128l6-3 8 1 4 4h-18z" fill="#8f98a8"/>
</g>
</svg>
</div>
<div class="lab" style="background:rgba(20,14,16,.9)"><div class="ubox" style="background:#0a6cff"><svg class="abs" style="left:0;top:0" width="25" height="25" viewBox="0 0 25 25"><circle cx="12.500" cy="8.800" r="3.600" fill="#fff"/><path d="M4.500 20.500c0.400-4.600 3.300-6.800 5.500-7.100 1.500 1.200 3.500 1.200 5 0 2.200 0.300 5.100 2.500 5.500 7.100z" fill="#fff"/></svg></div><svg class="abs" style="left:31px;top:4px" width="20" height="22" viewBox="0 0 20 22"><rect x="6.500" y="1.500" width="7" height="11" rx="3.500" fill="#fff"/><path d="M6.500 6.500h7v2.500a3.500 3.500 0 0 1-7 0z" fill="#4be04b"/><path d="M3.500 8.800a6.500 6.500 0 0 0 13 0M10 15.300v3" stroke="#fff" stroke-width="1.700" fill="none"/></svg><span style="margin-left:56px">陈为</span></div>
</div>
<div class="tile" style="top:350px"><div class="tin" style="background:#35312f">
<svg class="abs" style="left:82px;top:0;overflow:hidden" width="73" height="130" viewBox="0 0 73 130">
<defs>
<linearGradient id="bg3" x1="0" x2="1" y1="0" y2="0.600"><stop offset="0" stop-color="#cfc8fa"/><stop offset="0.350" stop-color="#d6d3dc"/><stop offset="0.700" stop-color="#e9e9ee"/><stop offset="1" stop-color="#f6f6fa"/></linearGradient>
<radialGradient id="gl3" cx="0.500" cy="0.500" r="0.500"><stop offset="0" stop-color="#fff"/><stop offset="0.500" stop-color="#f4f0ff" stop-opacity="0.900"/><stop offset="1" stop-color="#d8d0ff" stop-opacity="0"/></radialGradient>
<filter id="b3"><feGaussianBlur stdDeviation="1"/></filter>
</defs>
<rect width="73" height="130" fill="url(#bg3)"/>
<g filter="url(#b3)">
<path d="M16 0h57v34l-20-14-18-10z" fill="#c4c1c4"/>
<path d="M52 38h21v62h-16z" fill="#f7f7fb"/>
<path d="M0 88l10-2v16l-10 4z" fill="#8c88a4"/>
<path d="M8 86l40-2 6 6 19 10v30h-73v-26z" fill="#d9eaee"/>
<path d="M12 84l36-2-4 14-14 12-12-8z" fill="#b88f80"/>
<path d="M0 20c6-6 20-8 32-4 12 4 20 14 21 30 0 16-2 28-8 34-8 6-22 8-34 2l-11-10z" fill="#dab3a6"/>
<path d="M52 48c5-3 9-1 9 6s-3 13-8 14z" fill="#d8ac9e"/>
<path d="M7 13c6-11 24-13 38-6 11 6 14 18 13 38-3-6-5-10-7-11-3-8-8-12-16-14-10-3-20-3-28 3z" fill="#4f4a5c"/>
<path d="M18 26q8-3 16 0M0 34q4-1 8 1" stroke="#5c4a5a" stroke-width="2.200" fill="none"/>
<path d="M20 34q5 1.500 10 0M0 41q3 1 6 0" stroke="#4a3c4c" stroke-width="2" fill="none"/>
<path d="M8 47q4 2.500 9 1" stroke="#8a5c58" stroke-width="2.500" fill="none"/>
<path d="M2 60q8-4 16-1.500t12 6.500" stroke="#a87068" stroke-width="2.400" fill="none"/>
<path d="M2 70q12 4 26 0" stroke="#c49a8e" stroke-width="2" fill="none"/>
<path d="M50 90l23 10v30h-20l-3-22z" fill="#5d7d89"/>
<path d="M0 112l6-6 4 24h-10z" fill="#3c4a5c"/>
<path d="M2 104l8-6 4 10-6 18z" fill="#eef6f8"/>
<path d="M36 92l10-4 4 14-8 10z" fill="#c2d6dc"/>
<ellipse cx="4.500" cy="18.500" rx="7" ry="10" fill="url(#gl3)"/>
</g>
<path d="M46.800 62.800A10.200 10.200 0 1 1 36.800 55" stroke="#fff" stroke-width="2.500" fill="none" stroke-linecap="round"/>
</svg>
</div>
<div class="lab"><svg class="abs" style="left:5px;top:4px" width="20" height="22" viewBox="0 0 20 22"><rect x="6.500" y="1.500" width="7" height="11" rx="3.500" fill="#fff"/><path d="M3.500 8.800a6.500 6.500 0 0 0 13 0M10 15.300v3" stroke="#fff" stroke-width="1.700" fill="none"/><path d="M3 17.500L17 3" stroke="#111" stroke-width="3"/><path d="M3 17.500L17 3" stroke="#f0504a" stroke-width="1.500"/></svg><span style="margin-left:30px">应以文</span></div>
</div>
<div class="tile" style="top:496px"><div class="tin"><div class="bigav" style="top:25px">富明</div>
</div>
<div class="lab"><div class="ubox" style="background:#ff7f16"><svg class="abs" style="left:0;top:0" width="25" height="25" viewBox="0 0 25 25"><circle cx="12.500" cy="8.800" r="3.600" fill="#fff"/><path d="M4.500 20.500c0.400-4.600 3.300-6.800 5.500-7.100 1.500 1.200 3.500 1.200 5 0 2.200 0.300 5.100 2.500 5.500 7.100z" fill="#fff"/></svg></div><svg class="abs" style="left:31px;top:4px" width="20" height="22" viewBox="0 0 20 22"><rect x="6.500" y="1.500" width="7" height="11" rx="3.500" fill="#fff"/><path d="M3.500 8.800a6.500 6.500 0 0 0 13 0M10 15.300v3" stroke="#fff" stroke-width="1.700" fill="none"/><path d="M3 17.500L17 3" stroke="#111" stroke-width="3"/><path d="M3 17.500L17 3" stroke="#f0504a" stroke-width="1.500"/></svg><span style="margin-left:56px">温州知产委+徐富明</span></div>
</div>
<div class="tile" style="top:643px"><div class="tin"><div class="bigav" style="top:25px;background:radial-gradient(circle at 45% 45%,#70748a 0%,#5a5e72 55%,#4a4d60 100%)">
<svg class="abs" style="left:0;top:0;overflow:hidden" width="65" height="65" viewBox="0 0 65 65"><defs><filter id="b5"><feGaussianBlur stdDeviation="0.600"/></filter></defs><g filter="url(#b5)">
<path d="M4 65c2-10 8-14 18-17l8-3 8 3c10 3 18 7 22 17z" fill="#1f2540"/>
<path d="M22 46l9 19 8-19-8-4z" fill="#dfe6f4"/>
<path d="M29 50h4l2 15h-8z" fill="#3a4668"/>
<ellipse cx="31" cy="26" rx="12.500" ry="16" fill="#e0b9a2"/>
<path d="M18 22c-2-12 4-18 13-18s16 5 13 18c-2-6-3-8-6-10-5 2-12 2-16 0-2 2-3 5-4 10z" fill="#1e1a1a"/>
<path d="M20 24h22" stroke="#7a6a66" stroke-width="0.900"/>
</g></svg>
</div>
</div>
<div class="lab"><div class="ubox" style="background:#0a6cff"><svg class="abs" style="left:0;top:0" width="25" height="25" viewBox="0 0 25 25"><circle cx="12.500" cy="8.800" r="3.600" fill="#fff"/><path d="M4.500 20.500c0.400-4.600 3.300-6.800 5.500-7.100 1.500 1.200 3.500 1.200 5 0 2.200 0.300 5.100 2.500 5.500 7.100z" fill="#fff"/></svg></div><svg class="abs" style="left:31px;top:4px" width="20" height="22" viewBox="0 0 20 22"><rect x="6.500" y="1.500" width="7" height="11" rx="3.500" fill="#fff"/><path d="M3.500 8.800a6.500 6.500 0 0 0 13 0M10 15.300v3" stroke="#fff" stroke-width="1.700" fill="none"/><path d="M3 17.500L17 3" stroke="#111" stroke-width="3"/><path d="M3 17.500L17 3" stroke="#f0504a" stroke-width="1.500"/></svg><span style="margin-left:56px">王延军</span></div>
</div>
<div class="tile" style="top:790px"><div class="tin"><div class="bigav" style="top:24px;background:linear-gradient(180deg,#f4f4f2 0%,#ecebe6 38%,#b9aa98 42%,#8a4a30 50%,#5a3424 60%,#3a2a24 100%)">
<svg class="abs" style="left:0;top:0;overflow:hidden" width="65" height="65" viewBox="0 0 65 65"><defs><filter id="b6"><feGaussianBlur stdDeviation="0.600"/></filter></defs><g filter="url(#b6)">
<rect x="0" y="26" width="65" height="3" fill="#6a6258"/>
<path d="M8 65c0-14 6-22 16-26l8-2 8 3c6 3 10 10 10 25z" fill="#4a4a40"/>
<path d="M30 38l4 24 4-1 1-22z" fill="#e8b9c0"/>
<ellipse cx="32" cy="26" rx="7.500" ry="10" fill="#d9a98c"/>
<path d="M24 24c-2-8 2-12 8-12s10 3 8 10c-2-4-4-5-8-5s-6 2-8 7z" fill="#1e1a18"/>
<rect x="34" y="42" width="4" height="14" rx="1.500" fill="#22222a"/>
<path d="M56 38l8 3-4 16-8-3z" fill="#f4f4f4"/>
</g></svg>
</div>
</div>
<div class="lab"><svg class="abs" style="left:5px;top:4px" width="20" height="22" viewBox="0 0 20 22"><rect x="6.500" y="1.500" width="7" height="11" rx="3.500" fill="#fff"/><path d="M3.500 8.800a6.500 6.500 0 0 0 13 0M10 15.300v3" stroke="#fff" stroke-width="1.700" fill="none"/><path d="M3 17.500L17 3" stroke="#111" stroke-width="3"/><path d="M3 17.500L17 3" stroke="#f0504a" stroke-width="1.500"/></svg><span style="margin-left:30px">陶子男</span></div>
</div>
</div>
<style>
#panel .tab{position:absolute;top:0;height:36px;font-size:15px;line-height:36px;color:#111;white-space:nowrap}
#list{position:absolute;left:0;top:80px;width:464px;height:829px;overflow:hidden}
.row{position:absolute;left:0;width:464px;height:55px}
.av{position:absolute;left:23px;top:8px;width:38px;height:38px;border-radius:50%;overflow:hidden;background:#0a6cff;color:#fff;font-size:13px;line-height:38px;text-align:center;white-space:nowrap}
.av i{position:absolute;display:block}
.nm{position:absolute;left:73px;top:5.5px;font-size:15px;line-height:22px;color:#111;white-space:nowrap}
.nm span{color:#888}
.sb{position:absolute;left:73px;top:26.5px;font-size:15px;line-height:22px;color:#8a8a8a;white-space:nowrap}
.ic{position:absolute;top:16px}
.bdg{position:absolute;left:46px;top:31.5px;width:15px;height:15px;border-radius:50%;background:#f1f1f4;box-shadow:0 0 0 1px #fff}
.bdg i{position:absolute;bottom:4px;width:2px;background:#d8d8dc}
.fbtn{position:absolute;top:930px;height:33px;border:1px solid #dcdde0;border-radius:2px;font-size:15px;line-height:31px;text-align:center;color:#0a6cff;background:#fff;white-space:nowrap}
</style>
<div id="panel">
<div class="abs" style="left:0;top:0;width:464px;height:36px;background:#f0f1f4;border-bottom:1px solid #cfd0d3"></div>
<div class="abs" style="left:214px;top:0;width:215px;height:36px;background:#fff;border-left:1px solid #d4d5d8;border-right:1px solid #d4d5d8"></div>
<svg class="abs" style="left:6px;top:10px" width="18" height="18" viewBox="0 0 18 18"><path d="M2.500 1.500h13a1.500 1.500 0 0 1 1.500 1.500v8a1.500 1.500 0 0 1-1.500 1.500h-2v3.500l-4-3.500h-7a1.500 1.500 0 0 1-1.500-1.500v-8a1.500 1.500 0 0 1 1.500-1.500z" fill="#8c8e93"/><circle cx="5.500" cy="7" r="1" fill="#fff"/><circle cx="9" cy="7" r="1" fill="#fff"/><circle cx="12.500" cy="7" r="1" fill="#fff"/></svg>
<div id="paneltop" class="abs" style="left:0;top:0;width:464px;height:1px;background:#dcdde0"></div>
<div class="tab" style="left:30px">聊天</div>
<svg class="abs" style="left:220px;top:9px" width="20" height="18" viewBox="0 0 20 18"><circle cx="9" cy="5" r="3.800" fill="#8c8e93"/><path d="M1.500 16.500c0.300-4.500 3-6.500 5-6.800 1.500 1 3.500 1 5 0 2 0.300 4.700 2.300 5 6.800z" fill="#8c8e93"/><path d="M13 3.200a3 3 0 0 1 1.500 5.300c2 0.800 4 2.500 4.200 6h-2.200c-0.300-3-1.500-4.800-3.800-5.600z" fill="#a8aaae"/></svg>
<div class="tab" style="left:243px">管理成员(195)</div>
<div class="abs" style="left:387px;top:5px;font-size:20px;line-height:24px;letter-spacing:0;color:#111">···</div>
<svg class="abs" style="left:409px;top:11px" width="14" height="14" viewBox="0 0 14 14"><path d="M1.500 1.500l11 11M12.500 1.500l-11 11" stroke="#111" stroke-width="1.500"/></svg>
<svg class="abs" style="left:439px;top:12px" width="12" height="12" viewBox="0 0 12 12"><path d="M1 2.500h10M1 6h10M1 9.500h10" stroke="#9a9ca0" stroke-width="1.100"/></svg>
<div class="abs" style="left:15px;top:41px;width:433px;height:38px;border:1px solid #1a78f0;border-radius:4px;box-shadow:0 0 0 1px rgba(26,120,240,.25);background:#fff"></div>
<svg class="abs" style="left:24px;top:52px" width="18" height="18" viewBox="0 0 18 18"><circle cx="7.300" cy="7.300" r="5" fill="none" stroke="#8a8c92" stroke-width="2"/><path d="M11 11l4.200 4.200" stroke="#8a8c92" stroke-width="2.300" stroke-linecap="round"/></svg>
<div class="abs" style="left:44px;top:50px;width:1px;height:20px;background:#111"></div>
<div id="list">
<div class="row" style="top:20px">
<div class="av">富明</div>
<div class="nm">温州知产委+徐富明<span>(主持人, 我)</span></div><div class="sb">**明企业</div>
<svg class="ic" style="left:362px" width="20" height="22" viewBox="0 0 20 22"><circle cx="10" cy="11" r="8.400" fill="#fff" stroke="#f8504c" stroke-width="1.100"/><circle cx="10" cy="11" r="4.900" fill="#fa3a36"/></svg><svg class="ic" style="left:392px" width="20" height="22" viewBox="0 0 20 22"><rect x="6" y="0.500" width="8" height="13.500" rx="4" fill="#c9cacd"/><path d="M3.200 9.500a6.800 6.800 0 0 0 13.600 0M10 16.300v3.200M5.500 20h9" stroke="#c9cacd" stroke-width="1.200" fill="none"/><path d="M1.800 18.700L18.200 2.500" stroke="#f4605c" stroke-width="1.300"/></svg><svg class="ic" style="left:420px" width="24" height="22" viewBox="0 0 24 22"><rect x="2.500" y="5.500" width="12.500" height="11.500" rx="1.800" fill="#c9cacd"/><path d="M16 10.500l4.800-4.300q0.700-0.500 0.700 0.400v8.800q0 0.900-0.700 0.400L16 11.500z" fill="#c9cacd"/><path d="M2 18L16 4" stroke="#f4605c" stroke-width="1.300"/></svg>
</div>
<div class="row" style="top:75px">
<div class="av">陈为</div>
<div class="nm">陈为</div><div class="sb">(联席主持人, 访客)</div>
<svg class="ic" style="left:362px" width="20" height="22" viewBox="0 0 20 22"><rect x="2.300" y="3.500" width="15.400" height="11.500" rx="1.800" fill="#c9cacd"/><path d="M6.500 12c0.400-2.600 2-4 4.700-4v-1.700l3.200 2.700-3.200 2.700v-1.700c-2 0-3.500 0.600-4.700 2z" fill="#fff"/><rect x="5" y="16.500" width="10" height="1.800" rx="0.900" fill="#c9cacd"/></svg><svg class="ic" style="left:392px" width="20" height="22" viewBox="0 0 20 22"><rect x="6" y="0.500" width="8" height="13.500" rx="4" fill="#c9cacd"/><path d="M3.200 9.500a6.800 6.800 0 0 0 13.600 0M10 16.300v3.200M5.500 20h9" stroke="#c9cacd" stroke-width="1.200" fill="none"/><path d="M6.400 6.500h7.200v3.500a3.600 3.600 0 0 1-7.200 0z" fill="#4bf04b"/></svg><svg class="ic" style="left:420px" width="24" height="22" viewBox="0 0 24 22"><rect x="2.500" y="5.500" width="12.500" height="11.500" rx="1.800" fill="#c9cacd"/><path d="M16 10.500l4.800-4.300q0.700-0.500 0.700 0.400v8.800q0 0.900-0.700 0.400L16 11.500z" fill="#c9cacd"/></svg>
</div>
<div class="row" style="top:130px">
<div class="av" style="background:#888"><svg width="38" height="38" viewBox="0 0 38 38" style="overflow:hidden"><rect width="38" height="38" fill="#d6d2cc"/><rect x="0" y="0" width="14" height="9" fill="#8a8378"/><path d="M2 0v9M5 0v9M8 0v9M11 0v9" stroke="#5a554c" stroke-width="1"/><rect x="15" y="3" width="23" height="22" fill="#3a3839"/><rect x="17" y="5" width="21" height="18" fill="#2c2b2d"/><path d="M0 18l8 4v12l-8-3z" fill="#b8463f"/><rect x="2" y="12" width="9" height="1.500" fill="#c98a84"/><path d="M11 38c0-9 1-15 4-18l5-2 5 2c4 3 5 9 5 18z" fill="#7a776d"/><path d="M25 22l6 6-2 3-6-5z" fill="#7a776d"/><ellipse cx="20" cy="11.500" rx="3.800" ry="4.800" fill="#b08a74"/><path d="M16 10c0-4 2-5.500 4-5.500s4.500 1.500 4 5.500c-1-2-2-3-4-3s-3 1-4 3z" fill="#2a2522"/><rect x="17.500" y="15" width="1.800" height="7" rx="0.900" fill="#1c1c1e"/></svg></div>
<div class="nm">黄润生</div><div class="sb">(联席主持人, 访客)</div>
<svg class="ic" style="left:392px" width="20" height="22" viewBox="0 0 20 22"><rect x="6" y="0.500" width="8" height="13.500" rx="4" fill="#c9cacd"/><path d="M3.200 9.500a6.800 6.800 0 0 0 13.600 0M10 16.300v3.200M5.500 20h9" stroke="#c9cacd" stroke-width="1.200" fill="none"/></svg><svg class="ic" style="left:420px" width="24" height="22" viewBox="0 0 24 22"><rect x="2.500" y="5.500" width="12.500" height="11.500" rx="1.800" fill="#c9cacd"/><path d="M16 10.500l4.800-4.300q0.700-0.500 0.700 0.400v8.800q0 0.900-0.700 0.400L16 11.500z" fill="#c9cacd"/></svg>
</div>
<div class="row" style="top:185px">
<div class="av" style="background:#888"><svg width="38" height="38" viewBox="0 0 38 38" style="overflow:hidden"><rect width="38" height="38" fill="#5c6074"/><ellipse cx="19" cy="12" rx="16" ry="14" fill="#6a6e84" opacity="0.700"/><path d="M1 38c1-7 5-10 11-12l7-2 7 2c6 2 10 5 11 12z" fill="#1f2540"/><path d="M13 25l6 12 6-12-6-3z" fill="#dfe5f2"/><path d="M17.700 28h2.600l1.500 10h-5.600z" fill="#36426a"/><path d="M17.700 30l2.600 1.500M17.400 33l3.400 1.500" stroke="#c9d0e4" stroke-width="0.700"/><ellipse cx="19" cy="15" rx="7" ry="8.800" fill="#dcb49c"/><path d="M11.800 13c-1-7 3-9.500 7.200-9.500s8.500 2.500 7.200 9.500c-0.800-3-1.500-4.500-3-5.500-3 1-6 1-8.500 0-1.500 1-2.200 2.500-2.900 5.500z" fill="#211c1b"/><path d="M12.500 14.500h13" stroke="#8a7a74" stroke-width="0.800"/></svg></div>
<div class="nm">王延军</div><div class="sb">(联席主持人, 访客)</div>
<svg class="ic" style="left:392px" width="20" height="22" viewBox="0 0 20 22"><rect x="6" y="0.500" width="8" height="13.500" rx="4" fill="#c9cacd"/><path d="M3.200 9.500a6.800 6.800 0 0 0 13.600 0M10 16.300v3.200M5.500 20h9" stroke="#c9cacd" stroke-width="1.200" fill="none"/><path d="M1.800 18.700L18.200 2.500" stroke="#f4605c" stroke-width="1.300"/></svg><svg class="ic" style="left:420px" width="24" height="22" viewBox="0 0 24 22"><rect x="2.500" y="5.500" width="12.500" height="11.500" rx="1.800" fill="#c9cacd"/><path d="M16 10.500l4.800-4.300q0.700-0.500 0.700 0.400v8.800q0 0.900-0.700 0.400L16 11.500z" fill="#c9cacd"/><path d="M2 18L16 4" stroke="#f4605c" stroke-width="1.300"/></svg>
</div>
<div class="row" style="top:240px">
<div class="av" style="background:#888"><svg width="38" height="38" viewBox="0 0 38 38" style="overflow:hidden"><rect width="38" height="38" fill="#8c8678"/><rect width="38" height="11" fill="#7c8874"/><rect y="8" width="38" height="5" fill="#9aa392"/><rect y="24" width="38" height="14" fill="#8a8274"/><rect y="30" width="38" height="8" fill="#7f796c"/><path d="M4 15h30l3 4v5l-3 2h-27l-3-4z" fill="#e6e6e4"/><rect x="10" y="11" width="18" height="5" fill="#d4d6d4"/><rect x="27" y="12" width="9" height="4" fill="#c03a34"/><circle cx="11" cy="21" r="2" fill="#1c1c1c"/><circle cx="16" cy="21" r="2" fill="#1c1c1c"/><circle cx="21" cy="21" r="2" fill="#1c1c1c"/><circle cx="29" cy="20.500" r="1.600" fill="#2a2a2a"/><circle cx="33.500" cy="20.500" r="1.600" fill="#2a2a2a"/></svg></div>
<div class="nm">应以文</div><div class="sb">(访客)</div>
<svg class="ic" style="left:392px" width="20" height="22" viewBox="0 0 20 22"><rect x="6" y="0.500" width="8" height="13.500" rx="4" fill="#c9cacd"/><path d="M3.200 9.500a6.800 6.800 0 0 0 13.600 0M10 16.300v3.200M5.500 20h9" stroke="#c9cacd" stroke-width="1.200" fill="none"/><path d="M1.800 18.700L18.200 2.500" stroke="#f4605c" stroke-width="1.300"/></svg><svg class="ic" style="left:420px" width="24" height="22" viewBox="0 0 24 22"><rect x="2.500" y="5.500" width="12.500" height="11.500" rx="1.800" fill="#c9cacd"/><path d="M16 10.500l4.800-4.300q0.700-0.500 0.700 0.400v8.800q0 0.900-0.700 0.400L16 11.500z" fill="#c9cacd"/></svg>
</div>
<div class="row" style="top:295px">
<div class="av" style="background:#888"><svg width="38" height="38" viewBox="0 0 38 38" style="overflow:hidden"><rect width="38" height="38" fill="#1a2224"/><ellipse cx="19" cy="16" rx="18" ry="16" fill="#27322f" opacity="0.800"/><path d="M3 38c1-8 5-12 10-14l6-2 6 2c5 2 9 6 10 14z" fill="#14171c"/><path d="M15.500 23l3.500 13 3.500-13-3.500-2z" fill="#d9dde6"/><path d="M18 25h2l0.800 12h-3.600z" fill="#1c2340"/><ellipse cx="19.500" cy="12.500" rx="5.200" ry="6.800" fill="#d6b4a0"/><path d="M14 11c-0.500-5.500 2.500-7.500 5.500-7.500s6.500 2 5.500 7.500c-0.800-2.500-1.500-3.500-2.500-4.200-2.500 0.800-5 0.800-6.500 0-1 0.700-1.500 1.700-2 4.200z" fill="#14100f"/><path d="M15 11.500h9" stroke="#3a3230" stroke-width="0.800"/><path d="M20 18.500c2-0.500 4 0.500 4.500 2.500l1.500 6-3 1-2-6z" fill="#cfa994"/></svg></div>
<div class="nm">20温州戴增收</div><div class="sb">(访客)</div>
<svg class="ic" style="left:392px" width="20" height="22" viewBox="0 0 20 22"><rect x="6" y="0.500" width="8" height="13.500" rx="4" fill="#c9cacd"/><path d="M3.200 9.500a6.800 6.800 0 0 0 13.600 0M10 16.300v3.200M5.500 20h9" stroke="#c9cacd" stroke-width="1.200" fill="none"/><path d="M1.800 18.700L18.200 2.500" stroke="#f4605c" stroke-width="1.300"/></svg><svg class="ic" style="left:420px" width="24" height="22" viewBox="0 0 24 22"><rect x="2.500" y="5.500" width="12.500" height="11.500" rx="1.800" fill="#c9cacd"/><path d="M16 10.500l4.800-4.300q0.700-0.500 0.700 0.400v8.800q0 0.900-0.700 0.400L16 11.500z" fill="#c9cacd"/><path d="M2 18L16 4" stroke="#f4605c" stroke-width="1.300"/></svg>
</div>
<div class="row" style="top:350px">
<div class="av" style="font-size:17px">A</div>
<div class="bdg"><i style="left:4px;height:5px;background:#f0504c"></i><i style="left:7px;height:7px"></i><i style="left:10px;height:9px"></i></div>
<div class="nm">A<span style="color:#111;letter-spacing:1.5px">~~~</span></div><div class="sb">(访客)</div>
<svg class="ic" style="left:392px" width="20" height="22" viewBox="0 0 20 22"><rect x="6" y="0.500" width="8" height="13.500" rx="4" fill="#c9cacd"/><path d="M3.200 9.500a6.800 6.800 0 0 0 13.600 0M10 16.300v3.200M5.500 20h9" stroke="#c9cacd" stroke-width="1.200" fill="none"/><path d="M1.800 18.700L18.200 2.500" stroke="#f4605c" stroke-width="1.300"/></svg><svg class="ic" style="left:420px" width="24" height="22" viewBox="0 0 24 22"><rect x="2.500" y="5.500" width="12.500" height="11.500" rx="1.800" fill="#c9cacd"/><path d="M16 10.500l4.800-4.300q0.700-0.500 0.700 0.400v8.800q0 0.900-0.700 0.400L16 11.500z" fill="#c9cacd"/><path d="M2 18L16 4" stroke="#f4605c" stroke-width="1.300"/></svg>
</div>
<div class="row" style="top:405px">
<div class="av" style="background:#888"><svg width="38" height="38" viewBox="0 0 38 38" style="overflow:hidden"><defs><linearGradient id="sk5" x1="0" y1="0" x2="0" y2="1"><stop offset="0" stop-color="#7ea4d2"/><stop offset="0.350" stop-color="#a4bfdc"/><stop offset="0.560" stop-color="#d2cfd6"/><stop offset="0.640" stop-color="#4a5f72"/><stop offset="0.680" stop-color="#5a7186"/><stop offset="0.780" stop-color="#6d879c"/><stop offset="1" stop-color="#5e788e"/></linearGradient></defs><rect width="38" height="38" fill="url(#sk5)"/><path d="M0 22l5-1.500 6 0.500 7-2 6 1 8-1.500 6 1.500v3h-38z" fill="#7a8ea4"/><rect y="23.500" width="38" height="1.800" fill="#2f4052"/></svg></div>
<div class="nm">C.sir</div><div class="sb">(访客)</div>
<svg class="ic" style="left:392px" width="20" height="22" viewBox="0 0 20 22"><rect x="6" y="0.500" width="8" height="13.500" rx="4" fill="#c9cacd"/><path d="M3.200 9.500a6.800 6.800 0 0 0 13.600 0M10 16.300v3.200M5.500 20h9" stroke="#c9cacd" stroke-width="1.200" fill="none"/><path d="M1.800 18.700L18.200 2.500" stroke="#f4605c" stroke-width="1.300"/></svg><svg class="ic" style="left:420px" width="24" height="22" viewBox="0 0 24 22"><rect x="2.500" y="5.500" width="12.500" height="11.500" rx="1.800" fill="#c9cacd"/><path d="M16 10.500l4.800-4.300q0.700-0.500 0.700 0.400v8.800q0 0.900-0.700 0.400L16 11.500z" fill="#c9cacd"/><path d="M2 18L16 4" stroke="#f4605c" stroke-width="1.300"/></svg>
</div>
<div class="row" style="top:460px">
<div class="av" style="background:#888"><svg width="38" height="38" viewBox="0 0 38 38" style="overflow:hidden"><rect width="38" height="38" fill="#c6cccc"/><path d="M0 14l6-8 6 3 6-7 7 5 6-3 7 6v12h-38z" fill="#a4aeac"/><path d="M6 6l6 3 6-7 7 5-4 4-6-2-5 3z" fill="#d4d8d8"/><path d="M22 14l8-6 8 4v14h-16z" fill="#2f6a4a"/><path d="M0 16l8-3 6 4v6h-14z" fill="#5a7d6c"/><rect y="19" width="38" height="7" fill="#3f8a82"/><path d="M0 24c8-3 22-2 38 5v9h-38z" fill="#8a5a30"/><path d="M0 27c8-2.500 22-1.500 38 5" stroke="#c9a070" stroke-width="1.500" fill="none"/><path d="M4 30c8-1.500 18 0 30 5" stroke="#4a2e1a" stroke-width="2.500" fill="none"/><path d="M0 33c10-1 20 1 30 5h-30z" fill="#3a2416"/></svg></div>
<div class="nm">Kali_纪律师</div><div class="sb">(访客)</div>
<svg class="ic" style="left:392px" width="20" height="22" viewBox="0 0 20 22"><rect x="6" y="0.500" width="8" height="13.500" rx="4" fill="#c9cacd"/><path d="M3.200 9.500a6.800 6.800 0 0 0 13.600 0M10 16.300v3.200M5.500 20h9" stroke="#c9cacd" stroke-width="1.200" fill="none"/><path d="M1.800 18.700L18.200 2.500" stroke="#f4605c" stroke-width="1.300"/></svg><svg class="ic" style="left:420px" width="24" height="22" viewBox="0 0 24 22"><rect x="2.500" y="5.500" width="12.500" height="11.500" rx="1.800" fill="#c9cacd"/><path d="M16 10.500l4.800-4.300q0.700-0.500 0.700 0.400v8.800q0 0.900-0.700 0.400L16 11.500z" fill="#c9cacd"/><path d="M2 18L16 4" stroke="#f4605c" stroke-width="1.300"/></svg>
</div>
<div class="row" style="top:515px">
<div class="av" style="background:#888"><svg width="38" height="38" viewBox="0 0 38 38" style="overflow:hidden"><rect width="38" height="38" fill="#3a363c"/><ellipse cx="19" cy="14" rx="17" ry="15" fill="#464148" opacity="0.800"/><path d="M6 38c0-9 3-14 8-15.500l5-2 5 2c5 1.500 8 6.500 8 15.500z" fill="#17181f"/><path d="M16.500 21l2.500 9 2.500-9-2.500-1.500z" fill="#d4d8e2"/><path d="M18.300 23h1.400l0.600 8h-2.600z" fill="#1f3a7a"/><path d="M8 29c4 2 18 2 22 0v4c-6 2.500-16 2.500-22 0z" fill="#0f1015"/><ellipse cx="19" cy="12" rx="4.600" ry="6" fill="#d4b29e"/><path d="M14.200 10.500c-0.500-5 2-7 4.800-7s5.500 2 4.800 7c-0.600-2.200-1.200-3.200-2.200-3.800-2 0.700-4 0.700-5.400 0-1 0.600-1.500 1.600-2 3.800z" fill="#121010"/><path d="M15 11h8" stroke="#2a2626" stroke-width="0.900"/></svg></div>
<div class="nm">kany</div><div class="sb">(访客)</div>
<svg class="ic" style="left:392px" width="20" height="22" viewBox="0 0 20 22"><rect x="6" y="0.500" width="8" height="13.500" rx="4" fill="#c9cacd"/><path d="M3.200 9.500a6.800 6.800 0 0 0 13.600 0M10 16.300v3.200M5.500 20h9" stroke="#c9cacd" stroke-width="1.200" fill="none"/><path d="M1.800 18.700L18.200 2.500" stroke="#f4605c" stroke-width="1.300"/></svg><svg class="ic" style="left:420px" width="24" height="22" viewBox="0 0 24 22"><rect x="2.500" y="5.500" width="12.500" height="11.500" rx="1.800" fill="#c9cacd"/><path d="M16 10.500l4.800-4.300q0.700-0.500 0.700 0.400v8.800q0 0.900-0.700 0.400L16 11.500z" fill="#c9cacd"/><path d="M2 18L16 4" stroke="#f4605c" stroke-width="1.300"/></svg>
</div>
<div class="row" style="top:570px">
<div class="av" style="font-size:17px">S</div>
<div class="nm">Silicon inside</div><div class="sb">(访客)</div>
<svg class="ic" style="left:392px" width="20" height="22" viewBox="0 0 20 22"><rect x="6" y="0.500" width="8" height="13.500" rx="4" fill="#c9cacd"/><path d="M3.200 9.500a6.800 6.800 0 0 0 13.600 0M10 16.300v3.200M5.500 20h9" stroke="#c9cacd" stroke-width="1.200" fill="none"/><path d="M1.800 18.700L18.200 2.500" stroke="#f4605c" stroke-width="1.300"/></svg><svg class="ic" style="left:420px" width="24" height="22" viewBox="0 0 24 22"><rect x="2.500" y="5.500" width="12.500" height="11.500" rx="1.800" fill="#c9cacd"/><path d="M16 10.500l4.800-4.300q0.700-0.500 0.700 0.400v8.800q0 0.900-0.700 0.400L16 11.500z" fill="#c9cacd"/><path d="M2 18L16 4" stroke="#f4605c" stroke-width="1.300"/></svg>
</div>
<div class="row" style="top:625px">
<div class="av">淡然</div>
<div class="bdg"><i style="left:4px;height:5px;background:#f0504c"></i><i style="left:7px;height:7px"></i><i style="left:10px;height:9px"></i></div>
<div class="nm">淡然</div><div class="sb">(访客)</div>
<svg class="ic" style="left:392px" width="20" height="22" viewBox="0 0 20 22"><rect x="6" y="0.500" width="8" height="13.500" rx="4" fill="#c9cacd"/><path d="M3.200 9.500a6.800 6.800 0 0 0 13.600 0M10 16.300v3.200M5.500 20h9" stroke="#c9cacd" stroke-width="1.200" fill="none"/><path d="M1.800 18.700L18.200 2.500" stroke="#f4605c" stroke-width="1.300"/></svg><svg class="ic" style="left:420px" width="24" height="22" viewBox="0 0 24 22"><rect x="2.500" y="5.500" width="12.500" height="11.500" rx="1.800" fill="#c9cacd"/><path d="M16 10.500l4.800-4.300q0.700-0.500 0.700 0.400v8.800q0 0.900-0.700 0.400L16 11.500z" fill="#c9cacd"/><path d="M2 18L16 4" stroke="#f4605c" stroke-width="1.300"/></svg>
</div>
<div class="row" style="top:680px">
<div class="av" style="background:#888"><svg width="38" height="38" viewBox="0 0 38 38" style="overflow:hidden"><rect width="38" height="38" fill="#6a2e1e"/><rect x="9" y="0" width="20" height="30" fill="#d9cdb0"/><rect x="11" y="2" width="5" height="20" fill="#f4ecd4"/><rect x="23" y="2" width="5" height="22" fill="#efe6cc"/><rect x="0" y="0" width="9" height="38" fill="#5a2418"/><rect x="29" y="0" width="9" height="38" fill="#63291b"/><path d="M0 28h38v10h-38z" fill="#5c2219"/><path d="M9 30h20v3h-20z" fill="#7a3424"/><circle cx="11" cy="24" r="3" fill="#3f6a3a"/><path d="M15.500 38v-16c0-2 1.500-3.500 3.500-3.500s3.500 1.500 3.500 3.500v16z" fill="#2c4682"/><ellipse cx="19" cy="15.500" rx="2.300" ry="2.800" fill="#d4b09a"/><path d="M16 13.500l3-2 3 2-3 1z" fill="#151722"/></svg></div>
<div class="nm">法进所+梅法进</div><div class="sb">(访客)</div>
<svg class="ic" style="left:392px" width="20" height="22" viewBox="0 0 20 22"><rect x="6" y="0.500" width="8" height="13.500" rx="4" fill="#c9cacd"/><path d="M3.200 9.500a6.800 6.800 0 0 0 13.600 0M10 16.300v3.200M5.500 20h9" stroke="#c9cacd" stroke-width="1.200" fill="none"/><path d="M1.800 18.700L18.200 2.500" stroke="#f4605c" stroke-width="1.300"/></svg><svg class="ic" style="left:420px" width="24" height="22" viewBox="0 0 24 22"><rect x="2.500" y="5.500" width="12.500" height="11.500" rx="1.800" fill="#c9cacd"/><path d="M16 10.500l4.800-4.300q0.700-0.500 0.700 0.400v8.800q0 0.900-0.700 0.400L16 11.500z" fill="#c9cacd"/><path d="M2 18L16 4" stroke="#f4605c" stroke-width="1.300"/></svg>
</div>
<div class="row" style="top:735px">
<div class="av">理师</div>
<div class="nm">方东律师、专利代理师</div><div class="sb">(访客)</div>
<svg class="ic" style="left:392px" width="20" height="22" viewBox="0 0 20 22"><rect x="6" y="0.500" width="8" height="13.500" rx="4" fill="#c9cacd"/><path d="M3.200 9.500a6.800 6.800 0 0 0 13.600 0M10 16.300v3.200M5.500 20h9" stroke="#c9cacd" stroke-width="1.200" fill="none"/><path d="M1.800 18.700L18.200 2.500" stroke="#f4605c" stroke-width="1.300"/></svg><svg class="ic" style="left:420px" width="24" height="22" viewBox="0 0 24 22"><rect x="2.500" y="5.500" width="12.500" height="11.500" rx="1.800" fill="#c9cacd"/><path d="M16 10.500l4.800-4.300q0.700-0.500 0.700 0.400v8.800q0 0.900-0.700 0.400L16 11.500z" fill="#c9cacd"/><path d="M2 18L16 4" stroke="#f4605c" stroke-width="1.300"/></svg>
</div>
<div class="row" style="top:790px">
<div class="av" style="background:#888"><svg width="38" height="38" viewBox="0 0 38 38" style="overflow:hidden"><rect width="38" height="38" fill="#c9992c"/><ellipse cx="19" cy="6" rx="20" ry="9" fill="#8a5a1c"/><ellipse cx="28" cy="8" rx="8" ry="4" fill="#e8d9a4"/><rect y="13" width="38" height="6" fill="#e3c872"/><path d="M2 38v-10c0-5 3-8 8.500-8s8.500 3 8.500 8v10z" fill="#e0b02c"/><path d="M20 38v-9c0-5 3-7.500 8-7.500s8 2.500 8 7.500v9z" fill="#d9aa2a"/><ellipse cx="11" cy="15" rx="5" ry="5.500" fill="#2a1c14"/><ellipse cx="27" cy="17" rx="5.200" ry="5" fill="#e6cfa0"/><path d="M22.500 15c1-3.500 8-3.500 9 0-2-1-7-1-9 0z" fill="#c9a060"/><text x="10.500" y="34" font-size="7" font-weight="bold" fill="#6a8a3a" text-anchor="middle" font-family="Liberation Sans,sans-serif">10</text><text x="28" y="34" font-size="7" font-weight="bold" fill="#6a8a3a" text-anchor="middle" font-family="Liberation Sans,sans-serif">W</text></svg></div>
<div class="nm">方亮</div><div class="sb">(访客)</div>
<svg class="ic" style="left:392px" width="20" height="22" viewBox="0 0 20 22"><rect x="6" y="0.500" width="8" height="13.500" rx="4" fill="#c9cacd"/><path d="M3.200 9.500a6.800 6.800 0 0 0 13.600 0M10 16.300v3.200M5.500 20h9" stroke="#c9cacd" stroke-width="1.200" fill="none"/><path d="M1.800 18.700L18.200 2.500" stroke="#f4605c" stroke-width="1.300"/></svg><svg class="ic" style="left:420px" width="24" height="22" viewBox="0 0 24 22"><rect x="2.500" y="5.500" width="12.500" height="11.500" rx="1.800" fill="#c9cacd"/><path d="M16 10.500l4.800-4.300q0.700-0.500 0.700 0.400v8.800q0 0.900-0.700 0.400L16 11.500z" fill="#c9cacd"/><path d="M2 18L16 4" stroke="#f4605c" stroke-width="1.300"/></svg>
</div>
</div>
<div class="abs" style="left:0;top:909px;width:464px;height:1px;background:#e6e7ea"></div>
<div class="fbtn" style="left:56px;width:110px">全体静音</div>
<div class="fbtn" style="left:186px;width:110px">解除全体静音</div>
<div class="fbtn" style="left:316px;width:90px">更多 <span style="font-size:9px;position:relative;top:-1px">▼</span></div>
</div>
<div id="taskbar">
 <div class="abs" style="left:0;top:0;width:1920px;height:1px;background:rgba(255,255,255,.35)"></div>
 <!-- weather -->
 <svg class="abs" style="left:32px;top:15px" width="16" height="32" viewBox="0 0 16 32">
  <path d="M8 9V4.500a3 3 0 0 1 6 0" stroke="#7f7a78" stroke-width="1.800" fill="none"/>
  <path d="M8 7c-3 3-4.500 8-3.500 13l3.500 10 3-10c1-5-0.500-10-3-13z" fill="#5fb4f4"/>
  <path d="M8 7c-1.200 4-1.500 9-1 13l1 10z" fill="#3f9ae8"/>
  <path d="M8 30v1.500" stroke="#555" stroke-width="1.200"/>
 </svg>
 <div class="abs" style="left:63px;top:11px;font-size:13.500px;line-height:20px;color:#222;white-space:nowrap">19°C</div>
 <div class="abs" style="left:63px;top:30px;font-size:15px;line-height:20px;color:#444;white-space:nowrap">雨快停了</div>
 <!-- start -->
 <svg class="abs" style="left:753px;top:16px" width="29" height="29" viewBox="0 0 29 29">
  <defs><linearGradient id="wn" x1="0" y1="0" x2="1" y2="1"><stop offset="0" stop-color="#35b6f4"/><stop offset="1" stop-color="#0a66c8"/></linearGradient></defs>
  <rect x="0" y="0" width="13.800" height="13.800" rx="0.800" fill="url(#wn)"/><rect x="15.200" y="0" width="13.800" height="13.800" rx="0.800" fill="url(#wn)"/><rect x="0" y="15.200" width="13.800" height="13.800" rx="0.800" fill="url(#wn)"/><rect x="15.200" y="15.200" width="13.800" height="13.800" rx="0.800" fill="url(#wn)"/>
 </svg>
 <!-- WPS -->
 <svg class="abs" style="left:809px;top:16px" width="28" height="28" viewBox="0 0 28 28"><rect x="0.500" y="0.500" width="27" height="26.500" rx="3.500" fill="#3c7cf0"/><path d="M5.500 9h4l2.200 7 2.300-7h3l2.300 7 2.200-7h1.500l-3 10.500h-2.200l-2.300-7-2.300 7h-2.200z" fill="#fff"/></svg>
 <!-- Edge -->
 <svg class="abs" style="left:862px;top:14px" width="32" height="32" viewBox="0 0 32 32">
  <defs><linearGradient id="ed1" x1="0" y1="0" x2="1" y2="1"><stop offset="0" stop-color="#2a8ee0"/><stop offset="1" stop-color="#134a96"/></linearGradient><linearGradient id="ed2" x1="0" y1="0" x2="1" y2="0"><stop offset="0" stop-color="#2fb6e8"/><stop offset="1" stop-color="#5fd06a"/></linearGradient></defs>
  <circle cx="16" cy="16" r="15" fill="url(#ed1)"/>
  <path d="M1.500 14C3 6 9 1 16 1c9 0 15 7 15 13 0 5-4 8-8 8-3 0-5-1.500-5-3 0-1 1-1.500 1-3.500 0-2.500-2.500-5-6-5-5 0-9 3-11.500 7z" fill="url(#ed2)"/>
  <path d="M13 10.500c-4 1-6 5-5 9.500 1 5 5 9 11 10.500-7 1.500-14-2-16-9s3-12 10-11z" fill="#1a5ab0"/>
  <path d="M18 19c0 2 2.500 4 6 4 2 0 4-0.500 5.500-2-2 5-6 8-11 8.500-5-1-8-6-7-10.500 0.500-2 2-3.500 4-4-0.500 1.500 2.500 2 2.500 4z" fill="#dceaf8" opacity="0.950"/>
 </svg>
 <!-- Tencent video -->
 <svg class="abs" style="left:916px;top:14px" width="34" height="32" viewBox="0 0 34 32">
  <path d="M3 5q0-3 3-2.500l24 11.500q3 2 0 4l-24 11.500q-3 0.500-3-2.500z" fill="#2f9ef4"/>
  <path d="M3 9l6-4 20 9q3 2 0 4l-20 9-6-4z" fill="#5fc83a"/>
  <path d="M2 8q0-2 2-1.500l4 2v15l-4 2q-2 0.500-2-1.500z" fill="#f58a1c"/>
  <path d="M10.500 9.500l12 6.500-12 6.500z" fill="#fff"/>
 </svg>
 <!-- WeCom -->
 <svg class="abs" style="left:972px;top:14px" width="34" height="32" viewBox="0 0 34 32">
  <path d="M14 3C7 3 2 7.500 2 13c0 3 1.500 5.500 4 7.500l-1 4.500 5-2.500c1.300 0.300 2.700 0.500 4 0.500" stroke="#2a8ef0" stroke-width="3" fill="none" stroke-linejoin="round"/>
  <path d="M14 3c6.500 0 11 4 12 8.500" stroke="#2a8ef0" stroke-width="3" fill="none"/>
  <circle cx="24.500" cy="16" r="2.600" fill="#5fc83a"/><circle cx="29" cy="21.500" r="2.600" fill="#f04a3a"/><circle cx="24.500" cy="27" r="2.600" fill="#2a8ef0"/><circle cx="19.500" cy="21.500" r="2.600" fill="#f5b21c"/>
  <path d="M24.500 17.500v8M21 21.500h7" stroke="#f5b21c" stroke-width="2"/>
 </svg>
 <!-- WeChat -->
 <svg class="abs" style="left:1026px;top:16px" width="34" height="28" viewBox="0 0 34 28">
  <path d="M13 1C6 1 1 5.500 1 11c0 3 1.500 5.500 4 7.300l-1 3.700 4.300-2.200c1.500 0.400 3 0.700 4.700 0.700 7 0 12-4.500 12-10S20 1 13 1z" fill="#3cc43c"/>
  <circle cx="9" cy="8" r="1.500" fill="#1f7a1f"/><circle cx="17" cy="8" r="1.500" fill="#1f7a1f"/>
  <path d="M23.500 10.500c-5.500 0-9.500 3.500-9.500 8s4 8 9.500 8c1.200 0 2.400-0.200 3.500-0.500l3.500 1.800-0.800-3c2-1.500 3.300-3.700 3.300-6.300 0-4.500-4-8-9.500-8z" fill="#ebebeb"/>
  <circle cx="20.500" cy="16.500" r="1.200" fill="#8a8a8a"/><circle cx="26.500" cy="16.500" r="1.200" fill="#8a8a8a"/>
 </svg>
 <!-- DingTalk -->
 <svg class="abs" style="left:1084px;top:16px" width="28" height="28" viewBox="0 0 28 28"><defs><linearGradient id="dt" x1="0" y1="0" x2="0" y2="1"><stop offset="0" stop-color="#2f9cff"/><stop offset="1" stop-color="#1574f0"/></linearGradient></defs><rect x="0.500" y="0.500" width="27" height="27" rx="5" fill="url(#dt)"/><path d="M8 5l13 5.500c0.800 2.500-1 5-3 6.500l1.500 0.500-4.500 6 0.500-4-2.500-0.500 2-3-4-1.500 4.500-0.500-6.500-3.500 5 0.500z" fill="#fff"/></svg>
 <!-- Tencent meeting (active) -->
 <div class="abs" style="left:1130px;top:6px;width:47px;height:48px;border-radius:5px;background:rgba(255,255,255,.5);box-shadow:0 0 0 1px rgba(255,255,255,.35)"></div>
 <div class="abs" style="left:1128px;top:6px;width:42px;height:48px;border-radius:5px;background:#fbeeee;box-shadow:1px 0 2px rgba(160,140,150,.35)"></div>
 <svg class="abs" style="left:1139px;top:16px" width="28" height="28" viewBox="0 0 28 28"><defs><linearGradient id="tm" x1="0" y1="0" x2="0" y2="1"><stop offset="0" stop-color="#2f8cf8"/><stop offset="1" stop-color="#0a5cf0"/></linearGradient></defs><rect x="0" y="0" width="28" height="28" rx="5" fill="url(#tm)"/><path d="M4 17.500l5.500-6.500 4.500 5 4-5 6 6.500-3 3-3-3.500-3.500 3.500-3.500-3.500-3.500 3.500z" fill="#fff"/><path d="M4 17.500l5.500-6.500 2.500 2.800-4.500 6.700z" fill="#a9cdfc"/></svg>
 <div class="abs" style="left:984px;top:51px;width:8px;height:3px;border-radius:2px;background:#8a8a90"></div>
 <div class="abs" style="left:1039px;top:51px;width:8px;height:3px;border-radius:2px;background:#8a8a90"></div>
 <div class="abs" style="left:1094px;top:51px;width:8px;height:3px;border-radius:2px;background:#8a8a90"></div>
 <div class="abs" style="left:1143px;top:50px;width:20px;height:4px;border-radius:2px;background:#0a6cd8"></div>
 <!-- tray -->
 <svg class="abs" style="left:1560px;top:20px" width="260" height="24" viewBox="0 0 260 24">
  <path d="M2.500 14l7-7 7 7" stroke="#222" stroke-width="1.700" fill="none"/>
  <rect x="41.500" y="1.500" width="7" height="12.500" rx="3.500" fill="none" stroke="#1a6fd0" stroke-width="1.700"/><path d="M38 10.500a7 7 0 0 0 14 0M45 17.500v4" stroke="#1a6fd0" stroke-width="1.700" fill="none"/>
  <g transform="translate(30 0)"><path d="M141 8a13 13 0 0 1 18 0M144.200 11.500a8.500 8.500 0 0 1 11.600 0M147 14.800a4.500 4.500 0 0 1 6 0" stroke="#222" stroke-width="1.500" fill="none"/><circle cx="150" cy="18" r="1.500" fill="#222"/>
  <path d="M169.500 8.500h3.500l5-4v15l-5-4h-3.500z" stroke="#222" stroke-width="1.400" fill="none" stroke-linejoin="round"/><path d="M181 9a4 4 0 0 1 0 6M184 6.500a7.500 7.500 0 0 1 0 11" stroke="#222" stroke-width="1.300" fill="none"/><path d="M187 4a11 11 0 0 1 0 16" stroke="#aaa" stroke-width="1.200" fill="none"/>
  <rect x="205.500" y="5.500" width="13" height="10" rx="2" fill="none" stroke="#222" stroke-width="1.400"/><rect x="207.500" y="7.500" width="9" height="6" rx="0.800" fill="#222"/><rect x="219.300" y="8.500" width="1.800" height="4" rx="0.900" fill="#222"/><path d="M200.500 6v4.500h5M202 3v3M204.500 3v3" stroke="#222" stroke-width="1.400" fill="none"/></g>
 </svg>
 <div class="abs" style="left:1633px;top:16px;font-size:21px;line-height:26px;color:#9a9aa2;font-weight:bold;text-shadow:1px 1px 0 #fff">中</div>
 <svg class="abs" style="left:1681px;top:18px" width="24" height="22" viewBox="0 0 24 22"><path d="M2.500 4l16-3.500q2.500 0 3 2.500l1.500 13q0 2.500-2.500 3l-13.500 2.500q-2.500 0-3-2.500l-2.500-12q0-2.500 1-3z" fill="#35b526"/><path d="M17.500 6.500q-8-2-11 0.500-2 2.500 1.500 3.500l6 1.200q3 1 0.500 3-4 1.500-9.500-0.500" stroke="#fff" stroke-width="2.600" fill="none"/></svg>
 <div class="abs" style="left:1780px;top:9px;width:115px;text-align:right;font-size:14.500px;line-height:20px;color:#1a1a1a;white-space:nowrap">19:05</div>
 <div class="abs" style="left:1780px;top:29px;width:115px;text-align:right;font-size:14.500px;line-height:20px;color:#1a1a1a;white-space:nowrap">2022/5/12</div>
</div>
<!-- IME floating bar -->
<div class="abs" style="left:1742px;top:987px;width:175px;height:30px;background:#f5f7fc;border:1px solid #c3cbdc;border-radius:3px;z-index:40"></div>
<svg class="abs" style="left:1712px;top:983px;z-index:41" width="38" height="36" viewBox="0 0 38 36"><path d="M4.500 5.500l23-4.500q3.500-0.500 4.500 3l3.500 21q0.500 3.500-3 4.500l-20 4.500q-3.500 0.500-4.500-3l-5.500-20q-1-4 2-5.500z" fill="#35b526"/><path d="M28 10q-12-3-17 0.500-3 3.500 2.500 5.500l9 2q4.500 1.500 1 4.500-6 2.500-15-0.500" stroke="#fff" stroke-width="4.200" fill="none"/></svg>
<div class="abs" style="left:1752px;top:988px;font-size:21px;font-weight:bold;line-height:28px;color:#464a5e;z-index:41">五</div>
<svg class="abs" style="left:1780px;top:991px;z-index:41" width="135" height="24" viewBox="0 0 135 24">
 <path d="M13 2.500a9 9 0 1 1-10.500 13.500 8.500 8.500 0 0 0 10.500-13.500z" fill="#464a5e"/>
 <circle cx="33" cy="7" r="2.200" fill="none" stroke="#464a5e" stroke-width="1.500"/><path d="M43 12.500q2.500 0 2 2.500t-3 4" stroke="#464a5e" stroke-width="2.200" fill="none"/><circle cx="43" cy="13.500" r="1.800" fill="#464a5e"/>
 <rect x="57" y="5.500" width="19" height="13" rx="1.500" fill="#464a5e"/><path d="M59.500 8.500h14M59.500 11.500h14" stroke="#f5f7fc" stroke-width="1.400" stroke-dasharray="1.800 1.200"/><path d="M62 15.500h9" stroke="#f5f7fc" stroke-width="1.500"/>
 <circle cx="95" cy="7.500" r="3.500" fill="#464a5e"/><path d="M87.500 17q0-5.500 7.500-5.500t7.500 5.500v1.500l-4 2.500h-7l-4-2.500z" fill="#464a5e"/>
 <circle cx="115" cy="8" r="3.700" fill="#464a5e"/><circle cx="123.500" cy="8" r="3.700" fill="#464a5e"/><circle cx="115" cy="16.500" r="3.700" fill="#464a5e"/><circle cx="123.500" cy="16.500" r="3.700" fill="#464a5e"/><circle cx="119.250" cy="12.250" r="1.400" fill="#f5f7fc"/>
</svg>

</body>
</html>
